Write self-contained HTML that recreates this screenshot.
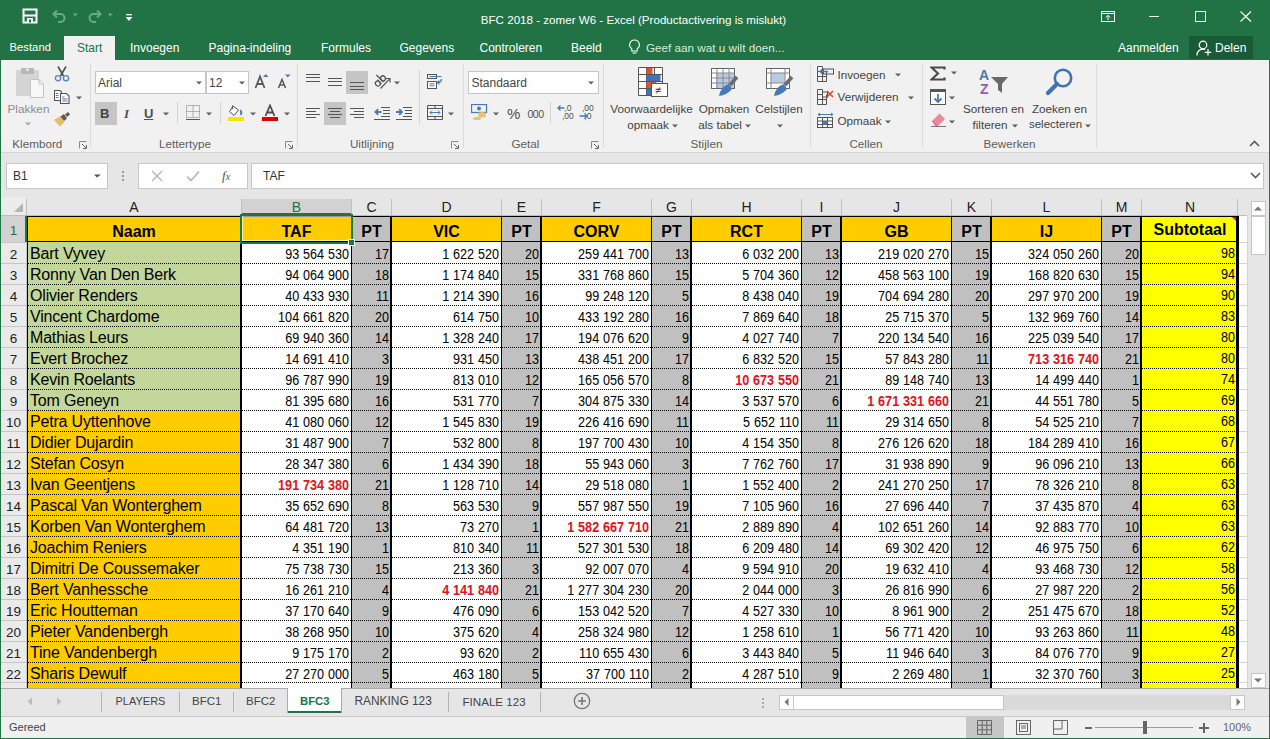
<!DOCTYPE html><html><head><meta charset="utf-8"><style>
*{box-sizing:border-box}
body{margin:0;width:1270px;height:739px;overflow:hidden;position:relative;background:#f3f3f3;font-family:"Liberation Sans",sans-serif}
.a{position:absolute}
.t{position:absolute;white-space:nowrap;line-height:1}
.nm{font-size:16px;letter-spacing:-0.18px;color:#000}
.nu{font-size:14px;color:#000;text-align:right;word-spacing:0.45px;transform:scaleX(0.9);transform-origin:100% 50%}
.hd{font-size:16px;font-weight:bold;color:#000;text-align:center}
.rd{color:#E0131B;font-weight:bold}
.ch{font-size:14px;color:#111;text-align:center}
.rh{font-size:13.5px;color:#262626;text-align:center}
.tb{font-size:12px;color:#fff}
.rb{font-size:12px;color:#444}
.gl{font-size:12px;color:#5b5b5b}
</style></head><body><div class="a" style="left:0;top:0;width:1270px;height:60px;background:#217346"></div>
<div class="a" style="left:0;top:153px;width:1270px;height:535px;background:#e6e6e6"></div>
<div class="a" style="left:1px;top:197px;width:1246px;height:18px;background:#e6e6e6"></div>
<div class="a" style="left:1px;top:197px;width:25px;height:18px;background:#ececec"></div>
<svg class="a" style="left:13px;top:202px" width="12" height="11"><path d="M10 1 L10 10 L1 10 Z" fill="#b5b5b5"/></svg>
<div class="a" style="left:1px;top:215px;width:1246px;height:1px;background:#bdbdbd"></div>
<div class="a" style="left:1px;top:216px;width:25px;height:472px;background:#eaeaea"></div>
<div class="a" style="left:1px;top:216px;width:24px;height:26px;background:#d2d2d2"></div>
<div class="a" style="left:25px;top:216px;width:2px;height:26px;background:#217346"></div>
<div class="a" style="left:242px;top:199px;width:110px;height:16px;background:#d2d2d2"></div>
<div class="a" style="left:242px;top:213px;width:110px;height:3px;background:#217346"></div>
<div class="a" style="left:26px;top:199px;width:1px;height:16px;background:#c0c0c0"></div>
<div class="a" style="left:241px;top:199px;width:1px;height:16px;background:#c0c0c0"></div>
<div class="a" style="left:351px;top:199px;width:1px;height:16px;background:#c0c0c0"></div>
<div class="a" style="left:391px;top:199px;width:1px;height:16px;background:#c0c0c0"></div>
<div class="a" style="left:501px;top:199px;width:1px;height:16px;background:#c0c0c0"></div>
<div class="a" style="left:541px;top:199px;width:1px;height:16px;background:#c0c0c0"></div>
<div class="a" style="left:651px;top:199px;width:1px;height:16px;background:#c0c0c0"></div>
<div class="a" style="left:691px;top:199px;width:1px;height:16px;background:#c0c0c0"></div>
<div class="a" style="left:801px;top:199px;width:1px;height:16px;background:#c0c0c0"></div>
<div class="a" style="left:841px;top:199px;width:1px;height:16px;background:#c0c0c0"></div>
<div class="a" style="left:951px;top:199px;width:1px;height:16px;background:#c0c0c0"></div>
<div class="a" style="left:991px;top:199px;width:1px;height:16px;background:#c0c0c0"></div>
<div class="a" style="left:1101px;top:199px;width:1px;height:16px;background:#c0c0c0"></div>
<div class="a" style="left:1141px;top:199px;width:1px;height:16px;background:#c0c0c0"></div>
<div class="a" style="left:1237px;top:199px;width:1px;height:16px;background:#c0c0c0"></div>
<div class="t ch" style="left:27px;top:200px;width:214px;color:#222">A</div>
<div class="t ch" style="left:242px;top:200px;width:109px;color:#217346">B</div>
<div class="t ch" style="left:352px;top:200px;width:39px;color:#222">C</div>
<div class="t ch" style="left:392px;top:200px;width:109px;color:#222">D</div>
<div class="t ch" style="left:502px;top:200px;width:39px;color:#222">E</div>
<div class="t ch" style="left:542px;top:200px;width:109px;color:#222">F</div>
<div class="t ch" style="left:652px;top:200px;width:39px;color:#222">G</div>
<div class="t ch" style="left:692px;top:200px;width:109px;color:#222">H</div>
<div class="t ch" style="left:802px;top:200px;width:39px;color:#222">I</div>
<div class="t ch" style="left:842px;top:200px;width:109px;color:#222">J</div>
<div class="t ch" style="left:952px;top:200px;width:39px;color:#222">K</div>
<div class="t ch" style="left:992px;top:200px;width:109px;color:#222">L</div>
<div class="t ch" style="left:1102px;top:200px;width:39px;color:#222">M</div>
<div class="t ch" style="left:1142px;top:200px;width:96px;color:#222">N</div>
<div class="a" style="left:1px;top:242px;width:25px;height:1px;background:#c6c6c6"></div>
<div class="t rh" style="left:1px;top:224px;width:25px;color:#217346">1</div>
<div class="a" style="left:1px;top:263px;width:25px;height:1px;background:#c6c6c6"></div>
<div class="t rh" style="left:1px;top:248px;width:25px;color:#222">2</div>
<div class="a" style="left:1px;top:284px;width:25px;height:1px;background:#c6c6c6"></div>
<div class="t rh" style="left:1px;top:269px;width:25px;color:#222">3</div>
<div class="a" style="left:1px;top:305px;width:25px;height:1px;background:#c6c6c6"></div>
<div class="t rh" style="left:1px;top:290px;width:25px;color:#222">4</div>
<div class="a" style="left:1px;top:326px;width:25px;height:1px;background:#c6c6c6"></div>
<div class="t rh" style="left:1px;top:311px;width:25px;color:#222">5</div>
<div class="a" style="left:1px;top:347px;width:25px;height:1px;background:#c6c6c6"></div>
<div class="t rh" style="left:1px;top:332px;width:25px;color:#222">6</div>
<div class="a" style="left:1px;top:368px;width:25px;height:1px;background:#c6c6c6"></div>
<div class="t rh" style="left:1px;top:353px;width:25px;color:#222">7</div>
<div class="a" style="left:1px;top:389px;width:25px;height:1px;background:#c6c6c6"></div>
<div class="t rh" style="left:1px;top:374px;width:25px;color:#222">8</div>
<div class="a" style="left:1px;top:410px;width:25px;height:1px;background:#c6c6c6"></div>
<div class="t rh" style="left:1px;top:395px;width:25px;color:#222">9</div>
<div class="a" style="left:1px;top:431px;width:25px;height:1px;background:#c6c6c6"></div>
<div class="t rh" style="left:1px;top:416px;width:25px;color:#222">10</div>
<div class="a" style="left:1px;top:452px;width:25px;height:1px;background:#c6c6c6"></div>
<div class="t rh" style="left:1px;top:437px;width:25px;color:#222">11</div>
<div class="a" style="left:1px;top:473px;width:25px;height:1px;background:#c6c6c6"></div>
<div class="t rh" style="left:1px;top:458px;width:25px;color:#222">12</div>
<div class="a" style="left:1px;top:494px;width:25px;height:1px;background:#c6c6c6"></div>
<div class="t rh" style="left:1px;top:479px;width:25px;color:#222">13</div>
<div class="a" style="left:1px;top:515px;width:25px;height:1px;background:#c6c6c6"></div>
<div class="t rh" style="left:1px;top:500px;width:25px;color:#222">14</div>
<div class="a" style="left:1px;top:536px;width:25px;height:1px;background:#c6c6c6"></div>
<div class="t rh" style="left:1px;top:521px;width:25px;color:#222">15</div>
<div class="a" style="left:1px;top:557px;width:25px;height:1px;background:#c6c6c6"></div>
<div class="t rh" style="left:1px;top:542px;width:25px;color:#222">16</div>
<div class="a" style="left:1px;top:578px;width:25px;height:1px;background:#c6c6c6"></div>
<div class="t rh" style="left:1px;top:563px;width:25px;color:#222">17</div>
<div class="a" style="left:1px;top:599px;width:25px;height:1px;background:#c6c6c6"></div>
<div class="t rh" style="left:1px;top:584px;width:25px;color:#222">18</div>
<div class="a" style="left:1px;top:620px;width:25px;height:1px;background:#c6c6c6"></div>
<div class="t rh" style="left:1px;top:605px;width:25px;color:#222">19</div>
<div class="a" style="left:1px;top:641px;width:25px;height:1px;background:#c6c6c6"></div>
<div class="t rh" style="left:1px;top:626px;width:25px;color:#222">20</div>
<div class="a" style="left:1px;top:662px;width:25px;height:1px;background:#c6c6c6"></div>
<div class="t rh" style="left:1px;top:647px;width:25px;color:#222">21</div>
<div class="a" style="left:1px;top:682px;width:25px;height:1px;background:#c6c6c6"></div>
<div class="t rh" style="left:1px;top:668px;width:25px;color:#222">22</div>
<div class="a" style="left:26px;top:216px;width:1px;height:472px;background:#c6c6c6"></div>
<div class="a" style="left:25px;top:216px;width:2px;height:26px;background:#217346"></div>
<div class="a" style="left:27px;top:216px;width:1220px;height:472px;background:#ffffff"></div>
<div class="a" style="left:1239px;top:242px;width:8px;height:1px;background:#d4d4d4"></div>
<div class="a" style="left:1239px;top:263px;width:8px;height:1px;background:#d4d4d4"></div>
<div class="a" style="left:1239px;top:284px;width:8px;height:1px;background:#d4d4d4"></div>
<div class="a" style="left:1239px;top:305px;width:8px;height:1px;background:#d4d4d4"></div>
<div class="a" style="left:1239px;top:326px;width:8px;height:1px;background:#d4d4d4"></div>
<div class="a" style="left:1239px;top:347px;width:8px;height:1px;background:#d4d4d4"></div>
<div class="a" style="left:1239px;top:368px;width:8px;height:1px;background:#d4d4d4"></div>
<div class="a" style="left:1239px;top:389px;width:8px;height:1px;background:#d4d4d4"></div>
<div class="a" style="left:1239px;top:410px;width:8px;height:1px;background:#d4d4d4"></div>
<div class="a" style="left:1239px;top:431px;width:8px;height:1px;background:#d4d4d4"></div>
<div class="a" style="left:1239px;top:452px;width:8px;height:1px;background:#d4d4d4"></div>
<div class="a" style="left:1239px;top:473px;width:8px;height:1px;background:#d4d4d4"></div>
<div class="a" style="left:1239px;top:494px;width:8px;height:1px;background:#d4d4d4"></div>
<div class="a" style="left:1239px;top:515px;width:8px;height:1px;background:#d4d4d4"></div>
<div class="a" style="left:1239px;top:536px;width:8px;height:1px;background:#d4d4d4"></div>
<div class="a" style="left:1239px;top:557px;width:8px;height:1px;background:#d4d4d4"></div>
<div class="a" style="left:1239px;top:578px;width:8px;height:1px;background:#d4d4d4"></div>
<div class="a" style="left:1239px;top:599px;width:8px;height:1px;background:#d4d4d4"></div>
<div class="a" style="left:1239px;top:620px;width:8px;height:1px;background:#d4d4d4"></div>
<div class="a" style="left:1239px;top:641px;width:8px;height:1px;background:#d4d4d4"></div>
<div class="a" style="left:1239px;top:662px;width:8px;height:1px;background:#d4d4d4"></div>
<div class="a" style="left:1239px;top:682px;width:8px;height:1px;background:#d4d4d4"></div>
<div class="a" style="left:1247px;top:216px;width:1px;height:472px;background:#d4d4d4"></div>
<div class="a" style="left:27px;top:216px;width:215px;height:26px;background:#FFCC00"></div>
<div class="a" style="left:27px;top:242px;width:215px;height:22px;background:#C4D79B"></div>
<div class="a" style="left:27px;top:264px;width:215px;height:21px;background:#C4D79B"></div>
<div class="a" style="left:27px;top:285px;width:215px;height:21px;background:#C4D79B"></div>
<div class="a" style="left:27px;top:306px;width:215px;height:21px;background:#C4D79B"></div>
<div class="a" style="left:27px;top:327px;width:215px;height:21px;background:#C4D79B"></div>
<div class="a" style="left:27px;top:348px;width:215px;height:21px;background:#C4D79B"></div>
<div class="a" style="left:27px;top:369px;width:215px;height:21px;background:#C4D79B"></div>
<div class="a" style="left:27px;top:390px;width:215px;height:21px;background:#C4D79B"></div>
<div class="a" style="left:27px;top:411px;width:215px;height:21px;background:#FFCC00"></div>
<div class="a" style="left:27px;top:432px;width:215px;height:21px;background:#FFCC00"></div>
<div class="a" style="left:27px;top:453px;width:215px;height:21px;background:#FFCC00"></div>
<div class="a" style="left:27px;top:474px;width:215px;height:21px;background:#FFCC00"></div>
<div class="a" style="left:27px;top:495px;width:215px;height:21px;background:#FFCC00"></div>
<div class="a" style="left:27px;top:516px;width:215px;height:21px;background:#FFCC00"></div>
<div class="a" style="left:27px;top:537px;width:215px;height:21px;background:#FFCC00"></div>
<div class="a" style="left:27px;top:558px;width:215px;height:21px;background:#FFCC00"></div>
<div class="a" style="left:27px;top:579px;width:215px;height:21px;background:#FFCC00"></div>
<div class="a" style="left:27px;top:600px;width:215px;height:21px;background:#FFCC00"></div>
<div class="a" style="left:27px;top:621px;width:215px;height:21px;background:#FFCC00"></div>
<div class="a" style="left:27px;top:642px;width:215px;height:21px;background:#FFCC00"></div>
<div class="a" style="left:27px;top:663px;width:215px;height:20px;background:#FFCC00"></div>
<div class="a" style="left:27px;top:683px;width:215px;height:5px;background:#FFCC00"></div>
<div class="a" style="left:242px;top:216px;width:110px;height:26px;background:#FFCC00"></div>
<div class="a" style="left:352px;top:216px;width:40px;height:26px;background:#C0C0C0"></div>
<div class="a" style="left:352px;top:242px;width:40px;height:22px;background:#C0C0C0"></div>
<div class="a" style="left:352px;top:264px;width:40px;height:21px;background:#C0C0C0"></div>
<div class="a" style="left:352px;top:285px;width:40px;height:21px;background:#C0C0C0"></div>
<div class="a" style="left:352px;top:306px;width:40px;height:21px;background:#C0C0C0"></div>
<div class="a" style="left:352px;top:327px;width:40px;height:21px;background:#C0C0C0"></div>
<div class="a" style="left:352px;top:348px;width:40px;height:21px;background:#C0C0C0"></div>
<div class="a" style="left:352px;top:369px;width:40px;height:21px;background:#C0C0C0"></div>
<div class="a" style="left:352px;top:390px;width:40px;height:21px;background:#C0C0C0"></div>
<div class="a" style="left:352px;top:411px;width:40px;height:21px;background:#C0C0C0"></div>
<div class="a" style="left:352px;top:432px;width:40px;height:21px;background:#C0C0C0"></div>
<div class="a" style="left:352px;top:453px;width:40px;height:21px;background:#C0C0C0"></div>
<div class="a" style="left:352px;top:474px;width:40px;height:21px;background:#C0C0C0"></div>
<div class="a" style="left:352px;top:495px;width:40px;height:21px;background:#C0C0C0"></div>
<div class="a" style="left:352px;top:516px;width:40px;height:21px;background:#C0C0C0"></div>
<div class="a" style="left:352px;top:537px;width:40px;height:21px;background:#C0C0C0"></div>
<div class="a" style="left:352px;top:558px;width:40px;height:21px;background:#C0C0C0"></div>
<div class="a" style="left:352px;top:579px;width:40px;height:21px;background:#C0C0C0"></div>
<div class="a" style="left:352px;top:600px;width:40px;height:21px;background:#C0C0C0"></div>
<div class="a" style="left:352px;top:621px;width:40px;height:21px;background:#C0C0C0"></div>
<div class="a" style="left:352px;top:642px;width:40px;height:21px;background:#C0C0C0"></div>
<div class="a" style="left:352px;top:663px;width:40px;height:20px;background:#C0C0C0"></div>
<div class="a" style="left:352px;top:683px;width:40px;height:5px;background:#C0C0C0"></div>
<div class="a" style="left:392px;top:216px;width:110px;height:26px;background:#FFCC00"></div>
<div class="a" style="left:502px;top:216px;width:40px;height:26px;background:#C0C0C0"></div>
<div class="a" style="left:502px;top:242px;width:40px;height:22px;background:#C0C0C0"></div>
<div class="a" style="left:502px;top:264px;width:40px;height:21px;background:#C0C0C0"></div>
<div class="a" style="left:502px;top:285px;width:40px;height:21px;background:#C0C0C0"></div>
<div class="a" style="left:502px;top:306px;width:40px;height:21px;background:#C0C0C0"></div>
<div class="a" style="left:502px;top:327px;width:40px;height:21px;background:#C0C0C0"></div>
<div class="a" style="left:502px;top:348px;width:40px;height:21px;background:#C0C0C0"></div>
<div class="a" style="left:502px;top:369px;width:40px;height:21px;background:#C0C0C0"></div>
<div class="a" style="left:502px;top:390px;width:40px;height:21px;background:#C0C0C0"></div>
<div class="a" style="left:502px;top:411px;width:40px;height:21px;background:#C0C0C0"></div>
<div class="a" style="left:502px;top:432px;width:40px;height:21px;background:#C0C0C0"></div>
<div class="a" style="left:502px;top:453px;width:40px;height:21px;background:#C0C0C0"></div>
<div class="a" style="left:502px;top:474px;width:40px;height:21px;background:#C0C0C0"></div>
<div class="a" style="left:502px;top:495px;width:40px;height:21px;background:#C0C0C0"></div>
<div class="a" style="left:502px;top:516px;width:40px;height:21px;background:#C0C0C0"></div>
<div class="a" style="left:502px;top:537px;width:40px;height:21px;background:#C0C0C0"></div>
<div class="a" style="left:502px;top:558px;width:40px;height:21px;background:#C0C0C0"></div>
<div class="a" style="left:502px;top:579px;width:40px;height:21px;background:#C0C0C0"></div>
<div class="a" style="left:502px;top:600px;width:40px;height:21px;background:#C0C0C0"></div>
<div class="a" style="left:502px;top:621px;width:40px;height:21px;background:#C0C0C0"></div>
<div class="a" style="left:502px;top:642px;width:40px;height:21px;background:#C0C0C0"></div>
<div class="a" style="left:502px;top:663px;width:40px;height:20px;background:#C0C0C0"></div>
<div class="a" style="left:502px;top:683px;width:40px;height:5px;background:#C0C0C0"></div>
<div class="a" style="left:542px;top:216px;width:110px;height:26px;background:#FFCC00"></div>
<div class="a" style="left:652px;top:216px;width:40px;height:26px;background:#C0C0C0"></div>
<div class="a" style="left:652px;top:242px;width:40px;height:22px;background:#C0C0C0"></div>
<div class="a" style="left:652px;top:264px;width:40px;height:21px;background:#C0C0C0"></div>
<div class="a" style="left:652px;top:285px;width:40px;height:21px;background:#C0C0C0"></div>
<div class="a" style="left:652px;top:306px;width:40px;height:21px;background:#C0C0C0"></div>
<div class="a" style="left:652px;top:327px;width:40px;height:21px;background:#C0C0C0"></div>
<div class="a" style="left:652px;top:348px;width:40px;height:21px;background:#C0C0C0"></div>
<div class="a" style="left:652px;top:369px;width:40px;height:21px;background:#C0C0C0"></div>
<div class="a" style="left:652px;top:390px;width:40px;height:21px;background:#C0C0C0"></div>
<div class="a" style="left:652px;top:411px;width:40px;height:21px;background:#C0C0C0"></div>
<div class="a" style="left:652px;top:432px;width:40px;height:21px;background:#C0C0C0"></div>
<div class="a" style="left:652px;top:453px;width:40px;height:21px;background:#C0C0C0"></div>
<div class="a" style="left:652px;top:474px;width:40px;height:21px;background:#C0C0C0"></div>
<div class="a" style="left:652px;top:495px;width:40px;height:21px;background:#C0C0C0"></div>
<div class="a" style="left:652px;top:516px;width:40px;height:21px;background:#C0C0C0"></div>
<div class="a" style="left:652px;top:537px;width:40px;height:21px;background:#C0C0C0"></div>
<div class="a" style="left:652px;top:558px;width:40px;height:21px;background:#C0C0C0"></div>
<div class="a" style="left:652px;top:579px;width:40px;height:21px;background:#C0C0C0"></div>
<div class="a" style="left:652px;top:600px;width:40px;height:21px;background:#C0C0C0"></div>
<div class="a" style="left:652px;top:621px;width:40px;height:21px;background:#C0C0C0"></div>
<div class="a" style="left:652px;top:642px;width:40px;height:21px;background:#C0C0C0"></div>
<div class="a" style="left:652px;top:663px;width:40px;height:20px;background:#C0C0C0"></div>
<div class="a" style="left:652px;top:683px;width:40px;height:5px;background:#C0C0C0"></div>
<div class="a" style="left:692px;top:216px;width:110px;height:26px;background:#FFCC00"></div>
<div class="a" style="left:802px;top:216px;width:40px;height:26px;background:#C0C0C0"></div>
<div class="a" style="left:802px;top:242px;width:40px;height:22px;background:#C0C0C0"></div>
<div class="a" style="left:802px;top:264px;width:40px;height:21px;background:#C0C0C0"></div>
<div class="a" style="left:802px;top:285px;width:40px;height:21px;background:#C0C0C0"></div>
<div class="a" style="left:802px;top:306px;width:40px;height:21px;background:#C0C0C0"></div>
<div class="a" style="left:802px;top:327px;width:40px;height:21px;background:#C0C0C0"></div>
<div class="a" style="left:802px;top:348px;width:40px;height:21px;background:#C0C0C0"></div>
<div class="a" style="left:802px;top:369px;width:40px;height:21px;background:#C0C0C0"></div>
<div class="a" style="left:802px;top:390px;width:40px;height:21px;background:#C0C0C0"></div>
<div class="a" style="left:802px;top:411px;width:40px;height:21px;background:#C0C0C0"></div>
<div class="a" style="left:802px;top:432px;width:40px;height:21px;background:#C0C0C0"></div>
<div class="a" style="left:802px;top:453px;width:40px;height:21px;background:#C0C0C0"></div>
<div class="a" style="left:802px;top:474px;width:40px;height:21px;background:#C0C0C0"></div>
<div class="a" style="left:802px;top:495px;width:40px;height:21px;background:#C0C0C0"></div>
<div class="a" style="left:802px;top:516px;width:40px;height:21px;background:#C0C0C0"></div>
<div class="a" style="left:802px;top:537px;width:40px;height:21px;background:#C0C0C0"></div>
<div class="a" style="left:802px;top:558px;width:40px;height:21px;background:#C0C0C0"></div>
<div class="a" style="left:802px;top:579px;width:40px;height:21px;background:#C0C0C0"></div>
<div class="a" style="left:802px;top:600px;width:40px;height:21px;background:#C0C0C0"></div>
<div class="a" style="left:802px;top:621px;width:40px;height:21px;background:#C0C0C0"></div>
<div class="a" style="left:802px;top:642px;width:40px;height:21px;background:#C0C0C0"></div>
<div class="a" style="left:802px;top:663px;width:40px;height:20px;background:#C0C0C0"></div>
<div class="a" style="left:802px;top:683px;width:40px;height:5px;background:#C0C0C0"></div>
<div class="a" style="left:842px;top:216px;width:110px;height:26px;background:#FFCC00"></div>
<div class="a" style="left:952px;top:216px;width:40px;height:26px;background:#C0C0C0"></div>
<div class="a" style="left:952px;top:242px;width:40px;height:22px;background:#C0C0C0"></div>
<div class="a" style="left:952px;top:264px;width:40px;height:21px;background:#C0C0C0"></div>
<div class="a" style="left:952px;top:285px;width:40px;height:21px;background:#C0C0C0"></div>
<div class="a" style="left:952px;top:306px;width:40px;height:21px;background:#C0C0C0"></div>
<div class="a" style="left:952px;top:327px;width:40px;height:21px;background:#C0C0C0"></div>
<div class="a" style="left:952px;top:348px;width:40px;height:21px;background:#C0C0C0"></div>
<div class="a" style="left:952px;top:369px;width:40px;height:21px;background:#C0C0C0"></div>
<div class="a" style="left:952px;top:390px;width:40px;height:21px;background:#C0C0C0"></div>
<div class="a" style="left:952px;top:411px;width:40px;height:21px;background:#C0C0C0"></div>
<div class="a" style="left:952px;top:432px;width:40px;height:21px;background:#C0C0C0"></div>
<div class="a" style="left:952px;top:453px;width:40px;height:21px;background:#C0C0C0"></div>
<div class="a" style="left:952px;top:474px;width:40px;height:21px;background:#C0C0C0"></div>
<div class="a" style="left:952px;top:495px;width:40px;height:21px;background:#C0C0C0"></div>
<div class="a" style="left:952px;top:516px;width:40px;height:21px;background:#C0C0C0"></div>
<div class="a" style="left:952px;top:537px;width:40px;height:21px;background:#C0C0C0"></div>
<div class="a" style="left:952px;top:558px;width:40px;height:21px;background:#C0C0C0"></div>
<div class="a" style="left:952px;top:579px;width:40px;height:21px;background:#C0C0C0"></div>
<div class="a" style="left:952px;top:600px;width:40px;height:21px;background:#C0C0C0"></div>
<div class="a" style="left:952px;top:621px;width:40px;height:21px;background:#C0C0C0"></div>
<div class="a" style="left:952px;top:642px;width:40px;height:21px;background:#C0C0C0"></div>
<div class="a" style="left:952px;top:663px;width:40px;height:20px;background:#C0C0C0"></div>
<div class="a" style="left:952px;top:683px;width:40px;height:5px;background:#C0C0C0"></div>
<div class="a" style="left:992px;top:216px;width:110px;height:26px;background:#FFCC00"></div>
<div class="a" style="left:1102px;top:216px;width:40px;height:26px;background:#C0C0C0"></div>
<div class="a" style="left:1102px;top:242px;width:40px;height:22px;background:#C0C0C0"></div>
<div class="a" style="left:1102px;top:264px;width:40px;height:21px;background:#C0C0C0"></div>
<div class="a" style="left:1102px;top:285px;width:40px;height:21px;background:#C0C0C0"></div>
<div class="a" style="left:1102px;top:306px;width:40px;height:21px;background:#C0C0C0"></div>
<div class="a" style="left:1102px;top:327px;width:40px;height:21px;background:#C0C0C0"></div>
<div class="a" style="left:1102px;top:348px;width:40px;height:21px;background:#C0C0C0"></div>
<div class="a" style="left:1102px;top:369px;width:40px;height:21px;background:#C0C0C0"></div>
<div class="a" style="left:1102px;top:390px;width:40px;height:21px;background:#C0C0C0"></div>
<div class="a" style="left:1102px;top:411px;width:40px;height:21px;background:#C0C0C0"></div>
<div class="a" style="left:1102px;top:432px;width:40px;height:21px;background:#C0C0C0"></div>
<div class="a" style="left:1102px;top:453px;width:40px;height:21px;background:#C0C0C0"></div>
<div class="a" style="left:1102px;top:474px;width:40px;height:21px;background:#C0C0C0"></div>
<div class="a" style="left:1102px;top:495px;width:40px;height:21px;background:#C0C0C0"></div>
<div class="a" style="left:1102px;top:516px;width:40px;height:21px;background:#C0C0C0"></div>
<div class="a" style="left:1102px;top:537px;width:40px;height:21px;background:#C0C0C0"></div>
<div class="a" style="left:1102px;top:558px;width:40px;height:21px;background:#C0C0C0"></div>
<div class="a" style="left:1102px;top:579px;width:40px;height:21px;background:#C0C0C0"></div>
<div class="a" style="left:1102px;top:600px;width:40px;height:21px;background:#C0C0C0"></div>
<div class="a" style="left:1102px;top:621px;width:40px;height:21px;background:#C0C0C0"></div>
<div class="a" style="left:1102px;top:642px;width:40px;height:21px;background:#C0C0C0"></div>
<div class="a" style="left:1102px;top:663px;width:40px;height:20px;background:#C0C0C0"></div>
<div class="a" style="left:1102px;top:683px;width:40px;height:5px;background:#C0C0C0"></div>
<div class="a" style="left:1142px;top:216px;width:97px;height:26px;background:#FFFF00"></div>
<div class="a" style="left:1142px;top:242px;width:97px;height:22px;background:#FFFF00"></div>
<div class="a" style="left:1142px;top:264px;width:97px;height:21px;background:#FFFF00"></div>
<div class="a" style="left:1142px;top:285px;width:97px;height:21px;background:#FFFF00"></div>
<div class="a" style="left:1142px;top:306px;width:97px;height:21px;background:#FFFF00"></div>
<div class="a" style="left:1142px;top:327px;width:97px;height:21px;background:#FFFF00"></div>
<div class="a" style="left:1142px;top:348px;width:97px;height:21px;background:#FFFF00"></div>
<div class="a" style="left:1142px;top:369px;width:97px;height:21px;background:#FFFF00"></div>
<div class="a" style="left:1142px;top:390px;width:97px;height:21px;background:#FFFF00"></div>
<div class="a" style="left:1142px;top:411px;width:97px;height:21px;background:#FFFF00"></div>
<div class="a" style="left:1142px;top:432px;width:97px;height:21px;background:#FFFF00"></div>
<div class="a" style="left:1142px;top:453px;width:97px;height:21px;background:#FFFF00"></div>
<div class="a" style="left:1142px;top:474px;width:97px;height:21px;background:#FFFF00"></div>
<div class="a" style="left:1142px;top:495px;width:97px;height:21px;background:#FFFF00"></div>
<div class="a" style="left:1142px;top:516px;width:97px;height:21px;background:#FFFF00"></div>
<div class="a" style="left:1142px;top:537px;width:97px;height:21px;background:#FFFF00"></div>
<div class="a" style="left:1142px;top:558px;width:97px;height:21px;background:#FFFF00"></div>
<div class="a" style="left:1142px;top:579px;width:97px;height:21px;background:#FFFF00"></div>
<div class="a" style="left:1142px;top:600px;width:97px;height:21px;background:#FFFF00"></div>
<div class="a" style="left:1142px;top:621px;width:97px;height:21px;background:#FFFF00"></div>
<div class="a" style="left:1142px;top:642px;width:97px;height:21px;background:#FFFF00"></div>
<div class="a" style="left:1142px;top:663px;width:97px;height:20px;background:#FFFF00"></div>
<div class="a" style="left:1142px;top:683px;width:97px;height:5px;background:#FFFF00"></div>
<div class="a" style="left:28px;top:263px;width:1210px;height:1px;background:repeating-linear-gradient(90deg,#000 0 1px,transparent 1px 2px)"></div>
<div class="a" style="left:28px;top:284px;width:1210px;height:1px;background:repeating-linear-gradient(90deg,#000 0 1px,transparent 1px 2px)"></div>
<div class="a" style="left:28px;top:305px;width:1210px;height:1px;background:repeating-linear-gradient(90deg,#000 0 1px,transparent 1px 2px)"></div>
<div class="a" style="left:28px;top:326px;width:1210px;height:1px;background:repeating-linear-gradient(90deg,#000 0 1px,transparent 1px 2px)"></div>
<div class="a" style="left:28px;top:347px;width:1210px;height:1px;background:repeating-linear-gradient(90deg,#000 0 1px,transparent 1px 2px)"></div>
<div class="a" style="left:28px;top:368px;width:1210px;height:1px;background:repeating-linear-gradient(90deg,#000 0 1px,transparent 1px 2px)"></div>
<div class="a" style="left:28px;top:389px;width:1210px;height:1px;background:repeating-linear-gradient(90deg,#000 0 1px,transparent 1px 2px)"></div>
<div class="a" style="left:28px;top:410px;width:1210px;height:1px;background:repeating-linear-gradient(90deg,#000 0 1px,transparent 1px 2px)"></div>
<div class="a" style="left:28px;top:431px;width:1210px;height:1px;background:repeating-linear-gradient(90deg,#000 0 1px,transparent 1px 2px)"></div>
<div class="a" style="left:28px;top:452px;width:1210px;height:1px;background:repeating-linear-gradient(90deg,#000 0 1px,transparent 1px 2px)"></div>
<div class="a" style="left:28px;top:473px;width:1210px;height:1px;background:repeating-linear-gradient(90deg,#000 0 1px,transparent 1px 2px)"></div>
<div class="a" style="left:28px;top:494px;width:1210px;height:1px;background:repeating-linear-gradient(90deg,#000 0 1px,transparent 1px 2px)"></div>
<div class="a" style="left:28px;top:515px;width:1210px;height:1px;background:repeating-linear-gradient(90deg,#000 0 1px,transparent 1px 2px)"></div>
<div class="a" style="left:28px;top:536px;width:1210px;height:1px;background:repeating-linear-gradient(90deg,#000 0 1px,transparent 1px 2px)"></div>
<div class="a" style="left:28px;top:557px;width:1210px;height:1px;background:repeating-linear-gradient(90deg,#000 0 1px,transparent 1px 2px)"></div>
<div class="a" style="left:28px;top:578px;width:1210px;height:1px;background:repeating-linear-gradient(90deg,#000 0 1px,transparent 1px 2px)"></div>
<div class="a" style="left:28px;top:599px;width:1210px;height:1px;background:repeating-linear-gradient(90deg,#000 0 1px,transparent 1px 2px)"></div>
<div class="a" style="left:28px;top:620px;width:1210px;height:1px;background:repeating-linear-gradient(90deg,#000 0 1px,transparent 1px 2px)"></div>
<div class="a" style="left:28px;top:641px;width:1210px;height:1px;background:repeating-linear-gradient(90deg,#000 0 1px,transparent 1px 2px)"></div>
<div class="a" style="left:28px;top:662px;width:1210px;height:1px;background:repeating-linear-gradient(90deg,#000 0 1px,transparent 1px 2px)"></div>
<div class="a" style="left:28px;top:682px;width:1210px;height:1px;background:repeating-linear-gradient(90deg,#000 0 1px,transparent 1px 2px)"></div>
<div class="a" style="left:27px;top:216px;width:1212px;height:1px;background:#000"></div>
<div class="a" style="left:27px;top:241px;width:1212px;height:1px;background:#000"></div>
<div class="a" style="left:240px;top:216px;width:2px;height:472px;background:#000"></div>
<div class="a" style="left:351px;top:216px;width:1px;height:472px;background:#000"></div>
<div class="a" style="left:390px;top:216px;width:2px;height:472px;background:#000"></div>
<div class="a" style="left:501px;top:216px;width:1px;height:472px;background:#000"></div>
<div class="a" style="left:540px;top:216px;width:2px;height:472px;background:#000"></div>
<div class="a" style="left:651px;top:216px;width:1px;height:472px;background:#000"></div>
<div class="a" style="left:690px;top:216px;width:2px;height:472px;background:#000"></div>
<div class="a" style="left:801px;top:216px;width:1px;height:472px;background:#000"></div>
<div class="a" style="left:840px;top:216px;width:2px;height:472px;background:#000"></div>
<div class="a" style="left:951px;top:216px;width:1px;height:472px;background:#000"></div>
<div class="a" style="left:990px;top:216px;width:2px;height:472px;background:#000"></div>
<div class="a" style="left:1101px;top:216px;width:1px;height:472px;background:#000"></div>
<div class="a" style="left:1140px;top:216px;width:2px;height:472px;background:#000"></div>
<div class="a" style="left:1236px;top:216px;width:3px;height:472px;background:#000"></div>
<div class="a" style="left:27px;top:216px;width:1px;height:472px;background:#000"></div>
<svg class="a" style="left:1232px;top:217px" width="4" height="4"><path d="M0 0 L4 0 L4 4 Z" fill="#c8201a"/></svg>
<div class="t hd" style="left:27px;top:224px;width:214px">Naam</div>
<div class="t hd" style="left:242px;top:224px;width:109px">TAF</div>
<div class="t hd" style="left:352px;top:224px;width:39px">PT</div>
<div class="t hd" style="left:392px;top:224px;width:109px">VIC</div>
<div class="t hd" style="left:502px;top:224px;width:39px">PT</div>
<div class="t hd" style="left:542px;top:224px;width:109px">CORV</div>
<div class="t hd" style="left:652px;top:224px;width:39px">PT</div>
<div class="t hd" style="left:692px;top:224px;width:109px">RCT</div>
<div class="t hd" style="left:802px;top:224px;width:39px">PT</div>
<div class="t hd" style="left:842px;top:224px;width:109px">GB</div>
<div class="t hd" style="left:952px;top:224px;width:39px">PT</div>
<div class="t hd" style="left:992px;top:224px;width:109px">IJ</div>
<div class="t hd" style="left:1102px;top:224px;width:39px">PT</div>
<div class="t hd" style="left:1142px;top:222px;width:96px">Subtotaal</div>
<div class="t nm" style="left:30px;top:246px">Bart Vyvey</div>
<div class="t nu" style="left:149px;top:247px;width:200px">93 564 530</div>
<div class="t nu" style="left:189px;top:247px;width:200px">17</div>
<div class="t nu" style="left:299px;top:247px;width:200px">1 622 520</div>
<div class="t nu" style="left:339px;top:247px;width:200px">20</div>
<div class="t nu" style="left:449px;top:247px;width:200px">259 441 700</div>
<div class="t nu" style="left:489px;top:247px;width:200px">13</div>
<div class="t nu" style="left:599px;top:247px;width:200px">6 032 200</div>
<div class="t nu" style="left:639px;top:247px;width:200px">13</div>
<div class="t nu" style="left:749px;top:247px;width:200px">219 020 270</div>
<div class="t nu" style="left:789px;top:247px;width:200px">15</div>
<div class="t nu" style="left:899px;top:247px;width:200px">324 050 260</div>
<div class="t nu" style="left:939px;top:247px;width:200px">20</div>
<div class="t nu" style="left:1035px;top:246px;width:200px">98</div>
<div class="t nm" style="left:30px;top:267px">Ronny Van Den Berk</div>
<div class="t nu" style="left:149px;top:268px;width:200px">94 064 900</div>
<div class="t nu" style="left:189px;top:268px;width:200px">18</div>
<div class="t nu" style="left:299px;top:268px;width:200px">1 174 840</div>
<div class="t nu" style="left:339px;top:268px;width:200px">15</div>
<div class="t nu" style="left:449px;top:268px;width:200px">331 768 860</div>
<div class="t nu" style="left:489px;top:268px;width:200px">15</div>
<div class="t nu" style="left:599px;top:268px;width:200px">5 704 360</div>
<div class="t nu" style="left:639px;top:268px;width:200px">12</div>
<div class="t nu" style="left:749px;top:268px;width:200px">458 563 100</div>
<div class="t nu" style="left:789px;top:268px;width:200px">19</div>
<div class="t nu" style="left:899px;top:268px;width:200px">168 820 630</div>
<div class="t nu" style="left:939px;top:268px;width:200px">15</div>
<div class="t nu" style="left:1035px;top:267px;width:200px">94</div>
<div class="t nm" style="left:30px;top:288px">Olivier Renders</div>
<div class="t nu" style="left:149px;top:289px;width:200px">40 433 930</div>
<div class="t nu" style="left:189px;top:289px;width:200px">11</div>
<div class="t nu" style="left:299px;top:289px;width:200px">1 214 390</div>
<div class="t nu" style="left:339px;top:289px;width:200px">16</div>
<div class="t nu" style="left:449px;top:289px;width:200px">99 248 120</div>
<div class="t nu" style="left:489px;top:289px;width:200px">5</div>
<div class="t nu" style="left:599px;top:289px;width:200px">8 438 040</div>
<div class="t nu" style="left:639px;top:289px;width:200px">19</div>
<div class="t nu" style="left:749px;top:289px;width:200px">704 694 280</div>
<div class="t nu" style="left:789px;top:289px;width:200px">20</div>
<div class="t nu" style="left:899px;top:289px;width:200px">297 970 200</div>
<div class="t nu" style="left:939px;top:289px;width:200px">19</div>
<div class="t nu" style="left:1035px;top:288px;width:200px">90</div>
<div class="t nm" style="left:30px;top:309px">Vincent Chardome</div>
<div class="t nu" style="left:149px;top:310px;width:200px">104 661 820</div>
<div class="t nu" style="left:189px;top:310px;width:200px">20</div>
<div class="t nu" style="left:299px;top:310px;width:200px">614 750</div>
<div class="t nu" style="left:339px;top:310px;width:200px">10</div>
<div class="t nu" style="left:449px;top:310px;width:200px">433 192 280</div>
<div class="t nu" style="left:489px;top:310px;width:200px">16</div>
<div class="t nu" style="left:599px;top:310px;width:200px">7 869 640</div>
<div class="t nu" style="left:639px;top:310px;width:200px">18</div>
<div class="t nu" style="left:749px;top:310px;width:200px">25 715 370</div>
<div class="t nu" style="left:789px;top:310px;width:200px">5</div>
<div class="t nu" style="left:899px;top:310px;width:200px">132 969 760</div>
<div class="t nu" style="left:939px;top:310px;width:200px">14</div>
<div class="t nu" style="left:1035px;top:309px;width:200px">83</div>
<div class="t nm" style="left:30px;top:330px">Mathias Leurs</div>
<div class="t nu" style="left:149px;top:331px;width:200px">69 940 360</div>
<div class="t nu" style="left:189px;top:331px;width:200px">14</div>
<div class="t nu" style="left:299px;top:331px;width:200px">1 328 240</div>
<div class="t nu" style="left:339px;top:331px;width:200px">17</div>
<div class="t nu" style="left:449px;top:331px;width:200px">194 076 620</div>
<div class="t nu" style="left:489px;top:331px;width:200px">9</div>
<div class="t nu" style="left:599px;top:331px;width:200px">4 027 740</div>
<div class="t nu" style="left:639px;top:331px;width:200px">7</div>
<div class="t nu" style="left:749px;top:331px;width:200px">220 134 540</div>
<div class="t nu" style="left:789px;top:331px;width:200px">16</div>
<div class="t nu" style="left:899px;top:331px;width:200px">225 039 540</div>
<div class="t nu" style="left:939px;top:331px;width:200px">17</div>
<div class="t nu" style="left:1035px;top:330px;width:200px">80</div>
<div class="t nm" style="left:30px;top:351px">Evert Brochez</div>
<div class="t nu" style="left:149px;top:352px;width:200px">14 691 410</div>
<div class="t nu" style="left:189px;top:352px;width:200px">3</div>
<div class="t nu" style="left:299px;top:352px;width:200px">931 450</div>
<div class="t nu" style="left:339px;top:352px;width:200px">13</div>
<div class="t nu" style="left:449px;top:352px;width:200px">438 451 200</div>
<div class="t nu" style="left:489px;top:352px;width:200px">17</div>
<div class="t nu" style="left:599px;top:352px;width:200px">6 832 520</div>
<div class="t nu" style="left:639px;top:352px;width:200px">15</div>
<div class="t nu" style="left:749px;top:352px;width:200px">57 843 280</div>
<div class="t nu" style="left:789px;top:352px;width:200px">11</div>
<div class="t nu rd" style="left:899px;top:352px;width:200px">713 316 740</div>
<div class="t nu" style="left:939px;top:352px;width:200px">21</div>
<div class="t nu" style="left:1035px;top:351px;width:200px">80</div>
<div class="t nm" style="left:30px;top:372px">Kevin Roelants</div>
<div class="t nu" style="left:149px;top:373px;width:200px">96 787 990</div>
<div class="t nu" style="left:189px;top:373px;width:200px">19</div>
<div class="t nu" style="left:299px;top:373px;width:200px">813 010</div>
<div class="t nu" style="left:339px;top:373px;width:200px">12</div>
<div class="t nu" style="left:449px;top:373px;width:200px">165 056 570</div>
<div class="t nu" style="left:489px;top:373px;width:200px">8</div>
<div class="t nu rd" style="left:599px;top:373px;width:200px">10 673 550</div>
<div class="t nu" style="left:639px;top:373px;width:200px">21</div>
<div class="t nu" style="left:749px;top:373px;width:200px">89 148 740</div>
<div class="t nu" style="left:789px;top:373px;width:200px">13</div>
<div class="t nu" style="left:899px;top:373px;width:200px">14 499 440</div>
<div class="t nu" style="left:939px;top:373px;width:200px">1</div>
<div class="t nu" style="left:1035px;top:372px;width:200px">74</div>
<div class="t nm" style="left:30px;top:393px">Tom Geneyn</div>
<div class="t nu" style="left:149px;top:394px;width:200px">81 395 680</div>
<div class="t nu" style="left:189px;top:394px;width:200px">16</div>
<div class="t nu" style="left:299px;top:394px;width:200px">531 770</div>
<div class="t nu" style="left:339px;top:394px;width:200px">7</div>
<div class="t nu" style="left:449px;top:394px;width:200px">304 875 330</div>
<div class="t nu" style="left:489px;top:394px;width:200px">14</div>
<div class="t nu" style="left:599px;top:394px;width:200px">3 537 570</div>
<div class="t nu" style="left:639px;top:394px;width:200px">6</div>
<div class="t nu rd" style="left:749px;top:394px;width:200px">1 671 331 660</div>
<div class="t nu" style="left:789px;top:394px;width:200px">21</div>
<div class="t nu" style="left:899px;top:394px;width:200px">44 551 780</div>
<div class="t nu" style="left:939px;top:394px;width:200px">5</div>
<div class="t nu" style="left:1035px;top:393px;width:200px">69</div>
<div class="t nm" style="left:30px;top:414px">Petra Uyttenhove</div>
<div class="t nu" style="left:149px;top:415px;width:200px">41 080 060</div>
<div class="t nu" style="left:189px;top:415px;width:200px">12</div>
<div class="t nu" style="left:299px;top:415px;width:200px">1 545 830</div>
<div class="t nu" style="left:339px;top:415px;width:200px">19</div>
<div class="t nu" style="left:449px;top:415px;width:200px">226 416 690</div>
<div class="t nu" style="left:489px;top:415px;width:200px">11</div>
<div class="t nu" style="left:599px;top:415px;width:200px">5 652 110</div>
<div class="t nu" style="left:639px;top:415px;width:200px">11</div>
<div class="t nu" style="left:749px;top:415px;width:200px">29 314 650</div>
<div class="t nu" style="left:789px;top:415px;width:200px">8</div>
<div class="t nu" style="left:899px;top:415px;width:200px">54 525 210</div>
<div class="t nu" style="left:939px;top:415px;width:200px">7</div>
<div class="t nu" style="left:1035px;top:414px;width:200px">68</div>
<div class="t nm" style="left:30px;top:435px">Didier Dujardin</div>
<div class="t nu" style="left:149px;top:436px;width:200px">31 487 900</div>
<div class="t nu" style="left:189px;top:436px;width:200px">7</div>
<div class="t nu" style="left:299px;top:436px;width:200px">532 800</div>
<div class="t nu" style="left:339px;top:436px;width:200px">8</div>
<div class="t nu" style="left:449px;top:436px;width:200px">197 700 430</div>
<div class="t nu" style="left:489px;top:436px;width:200px">10</div>
<div class="t nu" style="left:599px;top:436px;width:200px">4 154 350</div>
<div class="t nu" style="left:639px;top:436px;width:200px">8</div>
<div class="t nu" style="left:749px;top:436px;width:200px">276 126 620</div>
<div class="t nu" style="left:789px;top:436px;width:200px">18</div>
<div class="t nu" style="left:899px;top:436px;width:200px">184 289 410</div>
<div class="t nu" style="left:939px;top:436px;width:200px">16</div>
<div class="t nu" style="left:1035px;top:435px;width:200px">67</div>
<div class="t nm" style="left:30px;top:456px">Stefan Cosyn</div>
<div class="t nu" style="left:149px;top:457px;width:200px">28 347 380</div>
<div class="t nu" style="left:189px;top:457px;width:200px">6</div>
<div class="t nu" style="left:299px;top:457px;width:200px">1 434 390</div>
<div class="t nu" style="left:339px;top:457px;width:200px">18</div>
<div class="t nu" style="left:449px;top:457px;width:200px">55 943 060</div>
<div class="t nu" style="left:489px;top:457px;width:200px">3</div>
<div class="t nu" style="left:599px;top:457px;width:200px">7 762 760</div>
<div class="t nu" style="left:639px;top:457px;width:200px">17</div>
<div class="t nu" style="left:749px;top:457px;width:200px">31 938 890</div>
<div class="t nu" style="left:789px;top:457px;width:200px">9</div>
<div class="t nu" style="left:899px;top:457px;width:200px">96 096 210</div>
<div class="t nu" style="left:939px;top:457px;width:200px">13</div>
<div class="t nu" style="left:1035px;top:456px;width:200px">66</div>
<div class="t nm" style="left:30px;top:477px">Ivan Geentjens</div>
<div class="t nu rd" style="left:149px;top:478px;width:200px">191 734 380</div>
<div class="t nu" style="left:189px;top:478px;width:200px">21</div>
<div class="t nu" style="left:299px;top:478px;width:200px">1 128 710</div>
<div class="t nu" style="left:339px;top:478px;width:200px">14</div>
<div class="t nu" style="left:449px;top:478px;width:200px">29 518 080</div>
<div class="t nu" style="left:489px;top:478px;width:200px">1</div>
<div class="t nu" style="left:599px;top:478px;width:200px">1 552 400</div>
<div class="t nu" style="left:639px;top:478px;width:200px">2</div>
<div class="t nu" style="left:749px;top:478px;width:200px">241 270 250</div>
<div class="t nu" style="left:789px;top:478px;width:200px">17</div>
<div class="t nu" style="left:899px;top:478px;width:200px">78 326 210</div>
<div class="t nu" style="left:939px;top:478px;width:200px">8</div>
<div class="t nu" style="left:1035px;top:477px;width:200px">63</div>
<div class="t nm" style="left:30px;top:498px">Pascal Van Wonterghem</div>
<div class="t nu" style="left:149px;top:499px;width:200px">35 652 690</div>
<div class="t nu" style="left:189px;top:499px;width:200px">8</div>
<div class="t nu" style="left:299px;top:499px;width:200px">563 530</div>
<div class="t nu" style="left:339px;top:499px;width:200px">9</div>
<div class="t nu" style="left:449px;top:499px;width:200px">557 987 550</div>
<div class="t nu" style="left:489px;top:499px;width:200px">19</div>
<div class="t nu" style="left:599px;top:499px;width:200px">7 105 960</div>
<div class="t nu" style="left:639px;top:499px;width:200px">16</div>
<div class="t nu" style="left:749px;top:499px;width:200px">27 696 440</div>
<div class="t nu" style="left:789px;top:499px;width:200px">7</div>
<div class="t nu" style="left:899px;top:499px;width:200px">37 435 870</div>
<div class="t nu" style="left:939px;top:499px;width:200px">4</div>
<div class="t nu" style="left:1035px;top:498px;width:200px">63</div>
<div class="t nm" style="left:30px;top:519px">Korben Van Wonterghem</div>
<div class="t nu" style="left:149px;top:520px;width:200px">64 481 720</div>
<div class="t nu" style="left:189px;top:520px;width:200px">13</div>
<div class="t nu" style="left:299px;top:520px;width:200px">73 270</div>
<div class="t nu" style="left:339px;top:520px;width:200px">1</div>
<div class="t nu rd" style="left:449px;top:520px;width:200px">1 582 667 710</div>
<div class="t nu" style="left:489px;top:520px;width:200px">21</div>
<div class="t nu" style="left:599px;top:520px;width:200px">2 889 890</div>
<div class="t nu" style="left:639px;top:520px;width:200px">4</div>
<div class="t nu" style="left:749px;top:520px;width:200px">102 651 260</div>
<div class="t nu" style="left:789px;top:520px;width:200px">14</div>
<div class="t nu" style="left:899px;top:520px;width:200px">92 883 770</div>
<div class="t nu" style="left:939px;top:520px;width:200px">10</div>
<div class="t nu" style="left:1035px;top:519px;width:200px">63</div>
<div class="t nm" style="left:30px;top:540px">Joachim Reniers</div>
<div class="t nu" style="left:149px;top:541px;width:200px">4 351 190</div>
<div class="t nu" style="left:189px;top:541px;width:200px">1</div>
<div class="t nu" style="left:299px;top:541px;width:200px">810 340</div>
<div class="t nu" style="left:339px;top:541px;width:200px">11</div>
<div class="t nu" style="left:449px;top:541px;width:200px">527 301 530</div>
<div class="t nu" style="left:489px;top:541px;width:200px">18</div>
<div class="t nu" style="left:599px;top:541px;width:200px">6 209 480</div>
<div class="t nu" style="left:639px;top:541px;width:200px">14</div>
<div class="t nu" style="left:749px;top:541px;width:200px">69 302 420</div>
<div class="t nu" style="left:789px;top:541px;width:200px">12</div>
<div class="t nu" style="left:899px;top:541px;width:200px">46 975 750</div>
<div class="t nu" style="left:939px;top:541px;width:200px">6</div>
<div class="t nu" style="left:1035px;top:540px;width:200px">62</div>
<div class="t nm" style="left:30px;top:561px">Dimitri De Coussemaker</div>
<div class="t nu" style="left:149px;top:562px;width:200px">75 738 730</div>
<div class="t nu" style="left:189px;top:562px;width:200px">15</div>
<div class="t nu" style="left:299px;top:562px;width:200px">213 360</div>
<div class="t nu" style="left:339px;top:562px;width:200px">3</div>
<div class="t nu" style="left:449px;top:562px;width:200px">92 007 070</div>
<div class="t nu" style="left:489px;top:562px;width:200px">4</div>
<div class="t nu" style="left:599px;top:562px;width:200px">9 594 910</div>
<div class="t nu" style="left:639px;top:562px;width:200px">20</div>
<div class="t nu" style="left:749px;top:562px;width:200px">19 632 410</div>
<div class="t nu" style="left:789px;top:562px;width:200px">4</div>
<div class="t nu" style="left:899px;top:562px;width:200px">93 468 730</div>
<div class="t nu" style="left:939px;top:562px;width:200px">12</div>
<div class="t nu" style="left:1035px;top:561px;width:200px">58</div>
<div class="t nm" style="left:30px;top:582px">Bert Vanhessche</div>
<div class="t nu" style="left:149px;top:583px;width:200px">16 261 210</div>
<div class="t nu" style="left:189px;top:583px;width:200px">4</div>
<div class="t nu rd" style="left:299px;top:583px;width:200px">4 141 840</div>
<div class="t nu" style="left:339px;top:583px;width:200px">21</div>
<div class="t nu" style="left:449px;top:583px;width:200px">1 277 304 230</div>
<div class="t nu" style="left:489px;top:583px;width:200px">20</div>
<div class="t nu" style="left:599px;top:583px;width:200px">2 044 000</div>
<div class="t nu" style="left:639px;top:583px;width:200px">3</div>
<div class="t nu" style="left:749px;top:583px;width:200px">26 816 990</div>
<div class="t nu" style="left:789px;top:583px;width:200px">6</div>
<div class="t nu" style="left:899px;top:583px;width:200px">27 987 220</div>
<div class="t nu" style="left:939px;top:583px;width:200px">2</div>
<div class="t nu" style="left:1035px;top:582px;width:200px">56</div>
<div class="t nm" style="left:30px;top:603px">Eric Houtteman</div>
<div class="t nu" style="left:149px;top:604px;width:200px">37 170 640</div>
<div class="t nu" style="left:189px;top:604px;width:200px">9</div>
<div class="t nu" style="left:299px;top:604px;width:200px">476 090</div>
<div class="t nu" style="left:339px;top:604px;width:200px">6</div>
<div class="t nu" style="left:449px;top:604px;width:200px">153 042 520</div>
<div class="t nu" style="left:489px;top:604px;width:200px">7</div>
<div class="t nu" style="left:599px;top:604px;width:200px">4 527 330</div>
<div class="t nu" style="left:639px;top:604px;width:200px">10</div>
<div class="t nu" style="left:749px;top:604px;width:200px">8 961 900</div>
<div class="t nu" style="left:789px;top:604px;width:200px">2</div>
<div class="t nu" style="left:899px;top:604px;width:200px">251 475 670</div>
<div class="t nu" style="left:939px;top:604px;width:200px">18</div>
<div class="t nu" style="left:1035px;top:603px;width:200px">52</div>
<div class="t nm" style="left:30px;top:624px">Pieter Vandenbergh</div>
<div class="t nu" style="left:149px;top:625px;width:200px">38 268 950</div>
<div class="t nu" style="left:189px;top:625px;width:200px">10</div>
<div class="t nu" style="left:299px;top:625px;width:200px">375 620</div>
<div class="t nu" style="left:339px;top:625px;width:200px">4</div>
<div class="t nu" style="left:449px;top:625px;width:200px">258 324 980</div>
<div class="t nu" style="left:489px;top:625px;width:200px">12</div>
<div class="t nu" style="left:599px;top:625px;width:200px">1 258 610</div>
<div class="t nu" style="left:639px;top:625px;width:200px">1</div>
<div class="t nu" style="left:749px;top:625px;width:200px">56 771 420</div>
<div class="t nu" style="left:789px;top:625px;width:200px">10</div>
<div class="t nu" style="left:899px;top:625px;width:200px">93 263 860</div>
<div class="t nu" style="left:939px;top:625px;width:200px">11</div>
<div class="t nu" style="left:1035px;top:624px;width:200px">48</div>
<div class="t nm" style="left:30px;top:645px">Tine Vandenbergh</div>
<div class="t nu" style="left:149px;top:646px;width:200px">9 175 170</div>
<div class="t nu" style="left:189px;top:646px;width:200px">2</div>
<div class="t nu" style="left:299px;top:646px;width:200px">93 620</div>
<div class="t nu" style="left:339px;top:646px;width:200px">2</div>
<div class="t nu" style="left:449px;top:646px;width:200px">110 655 430</div>
<div class="t nu" style="left:489px;top:646px;width:200px">6</div>
<div class="t nu" style="left:599px;top:646px;width:200px">3 443 840</div>
<div class="t nu" style="left:639px;top:646px;width:200px">5</div>
<div class="t nu" style="left:749px;top:646px;width:200px">11 946 640</div>
<div class="t nu" style="left:789px;top:646px;width:200px">3</div>
<div class="t nu" style="left:899px;top:646px;width:200px">84 076 770</div>
<div class="t nu" style="left:939px;top:646px;width:200px">9</div>
<div class="t nu" style="left:1035px;top:645px;width:200px">27</div>
<div class="t nm" style="left:30px;top:666px">Sharis Dewulf</div>
<div class="t nu" style="left:149px;top:667px;width:200px">27 270 000</div>
<div class="t nu" style="left:189px;top:667px;width:200px">5</div>
<div class="t nu" style="left:299px;top:667px;width:200px">463 180</div>
<div class="t nu" style="left:339px;top:667px;width:200px">5</div>
<div class="t nu" style="left:449px;top:667px;width:200px">37 700 110</div>
<div class="t nu" style="left:489px;top:667px;width:200px">2</div>
<div class="t nu" style="left:599px;top:667px;width:200px">4 287 510</div>
<div class="t nu" style="left:639px;top:667px;width:200px">9</div>
<div class="t nu" style="left:749px;top:667px;width:200px">2 269 480</div>
<div class="t nu" style="left:789px;top:667px;width:200px">1</div>
<div class="t nu" style="left:899px;top:667px;width:200px">32 370 760</div>
<div class="t nu" style="left:939px;top:667px;width:200px">3</div>
<div class="t nu" style="left:1035px;top:666px;width:200px">25</div>
<div class="a" style="left:242px;top:216px;width:109px;height:1px;background:rgba(255,255,255,0.6)"></div>
<div class="a" style="left:242px;top:216px;width:1px;height:25px;background:rgba(255,255,255,0.6)"></div>
<div class="a" style="left:242px;top:240px;width:109px;height:1px;background:rgba(255,255,255,0.6)"></div>
<div class="a" style="left:240px;top:214px;width:113px;height:2px;background:#217346"></div>
<div class="a" style="left:240px;top:242px;width:113px;height:2px;background:#217346"></div>
<div class="a" style="left:240px;top:214px;width:2px;height:30px;background:#217346"></div>
<div class="a" style="left:351px;top:214px;width:2px;height:30px;background:#217346"></div>
<div class="a" style="left:348px;top:239px;width:7px;height:7px;background:#ffffff"></div>
<div class="a" style="left:349px;top:240px;width:5px;height:5px;background:#217346"></div>
<svg class="a" style="left:22px;top:8px" width="16" height="16" viewBox="0 0 16 16"><path d="M1.5 1.5 H14.5 V14.5 H1.5 Z" fill="none" stroke="#fff" stroke-width="2"/><rect x="3" y="2.5" width="10" height="4.5" fill="none"/><path d="M1 7.5 H15" stroke="#fff" stroke-width="2"/><rect x="5" y="10" width="6" height="5" fill="#fff"/><rect x="7" y="11.5" width="2" height="3" fill="#217346"/></svg>
<svg class="a" style="left:51px;top:9px" width="16" height="14" viewBox="0 0 16 14"><path d="M3 5 H9.5 A4 4 0 0 1 9.5 13 H7" fill="none" stroke="#6aa986" stroke-width="2"/><path d="M6 1.5 L2.5 5 L6 8.5" fill="none" stroke="#6aa986" stroke-width="2"/></svg>
<svg class="a" style="left:72.5px;top:13px" width="5.0" height="4" viewBox="0 0 5.0 4"><path d="M0 0.5 L5 0.5 L2 3.5 Z" fill="#6aa986"/></svg>
<svg class="a" style="left:87px;top:9px" width="16" height="14" viewBox="0 0 16 14"><path d="M13 5 H6.5 A4 4 0 0 0 6.5 13 H9" fill="none" stroke="#6aa986" stroke-width="2"/><path d="M10 1.5 L13.5 5 L10 8.5" fill="none" stroke="#6aa986" stroke-width="2"/></svg>
<svg class="a" style="left:107.5px;top:13px" width="5.0" height="4" viewBox="0 0 5.0 4"><path d="M0 0.5 L5 0.5 L2 3.5 Z" fill="#6aa986"/></svg>
<svg class="a" style="left:125px;top:14px" width="8" height="8" viewBox="0 0 8 8"><rect x="1" y="0" width="6" height="1.3" fill="#fff"/><path d="M0.5 3 H7.5 L4 7 Z" fill="#fff"/></svg>
<div class="t" style="left:480px;top:14px;width:307px;font-size:11.6px;color:#fff;text-align:center">BFC 2018 - zomer W6 - Excel (Productactivering is mislukt)</div>
<svg class="a" style="left:1101px;top:11px" width="14" height="11" viewBox="0 0 14 11"><rect x="0.5" y="0.5" width="13" height="10" fill="none" stroke="#fff"/><path d="M0.5 2.5 H13.5" stroke="#fff"/><path d="M7 9 V4.5 M4.8 6.5 L7 4.3 L9.2 6.5" fill="none" stroke="#fff"/></svg>
<div class="a" style="left:1149px;top:16px;width:10px;height:1px;background:#fff;"></div>
<svg class="a" style="left:1195px;top:11px" width="11" height="11" viewBox="0 0 11 11"><rect x="0.5" y="0.5" width="10" height="10" fill="none" stroke="#fff"/></svg>
<svg class="a" style="left:1240px;top:11px" width="12" height="11" viewBox="0 0 12 11"><path d="M0.5 0.5 L11 10.5 M11 0.5 L0.5 10.5" stroke="#fff" stroke-width="1.1"/></svg>
<div class="a" style="left:64px;top:36px;width:51px;height:24px;background:#f1f1f1;"></div>
<div class="t" style="left:9.5px;top:42px;font-size:11.3px;color:#fff;">Bestand</div>
<div class="t" style="left:208.5px;top:42px;font-size:12px;color:#fff;">Pagina-indeling</div>
<div class="t" style="left:130px;top:42px;font-size:12px;color:#fff;">Invoegen</div>
<div class="t" style="left:321px;top:42px;font-size:12px;color:#fff;">Formules</div>
<div class="t" style="left:399.5px;top:42px;font-size:12px;color:#fff;">Gegevens</div>
<div class="t" style="left:479.5px;top:42px;font-size:12px;color:#fff;">Controleren</div>
<div class="t" style="left:571px;top:42px;font-size:12px;color:#fff;">Beeld</div>
<div class="t" style="left:77px;top:42px;font-size:12px;color:#217346;">Start</div>
<svg class="a" style="left:628px;top:39px" width="13" height="16" viewBox="0 0 13 16"><path d="M6.5 1 A4.8 4.8 0 0 0 3.8 9.8 V12 H9.2 V9.8 A4.8 4.8 0 0 0 6.5 1 Z" fill="none" stroke="#fff" stroke-width="1.1"/><path d="M4.5 14 H8.5" stroke="#fff" stroke-width="1.1"/></svg>
<div class="t" style="left:646px;top:42px;font-size:11.7px;color:#dbe8df;">Geef aan wat u wilt doen...</div>
<div class="t" style="left:1118px;top:42px;font-size:12px;color:#fff;">Aanmelden</div>
<div class="a" style="left:1189px;top:36px;width:64px;height:23px;background:#1a5b37;"></div>
<svg class="a" style="left:1196px;top:40px" width="16" height="16" viewBox="0 0 16 16"><circle cx="7" cy="5" r="3.8" fill="none" stroke="#fff" stroke-width="1.2"/><path d="M1 15.5 A6 6 0 0 1 9 9.5" fill="none" stroke="#fff" stroke-width="1.2"/><path d="M12 9 V15.5 M8.8 12.3 H15.2" stroke="#fff" stroke-width="1.2"/></svg>
<div class="t" style="left:1215px;top:42px;font-size:12px;color:#fff;">Delen</div>
<div class="a" style="left:1px;top:60px;width:1268px;height:92px;background:#f1f1f1;"></div>
<div class="a" style="left:1px;top:152px;width:1268px;height:1px;background:#d5d5d5;"></div>
<div class="a" style="left:90px;top:64px;width:1px;height:84px;background:#dadada;"></div>
<div class="a" style="left:297px;top:64px;width:1px;height:84px;background:#dadada;"></div>
<div class="a" style="left:463px;top:64px;width:1px;height:84px;background:#dadada;"></div>
<div class="a" style="left:603px;top:64px;width:1px;height:84px;background:#dadada;"></div>
<div class="a" style="left:810px;top:64px;width:1px;height:84px;background:#dadada;"></div>
<div class="a" style="left:922px;top:64px;width:1px;height:84px;background:#dadada;"></div>
<div class="a" style="left:1096px;top:64px;width:1px;height:84px;background:#dadada;"></div>
<div class="t" style="left:-162.7px;top:138px;width:400px;text-align:center;font-size:11.7px;color:#5e5e5e;">Klembord</div>
<div class="t" style="left:-15px;top:138px;width:400px;text-align:center;font-size:11.7px;color:#5e5e5e;">Lettertype</div>
<div class="t" style="left:172px;top:138px;width:400px;text-align:center;font-size:11.7px;color:#5e5e5e;">Uitlijning</div>
<div class="t" style="left:325.5px;top:138px;width:400px;text-align:center;font-size:11.7px;color:#5e5e5e;">Getal</div>
<div class="t" style="left:506.5px;top:138px;width:400px;text-align:center;font-size:11.7px;color:#5e5e5e;">Stijlen</div>
<div class="t" style="left:666px;top:138px;width:400px;text-align:center;font-size:11.7px;color:#5e5e5e;">Cellen</div>
<div class="t" style="left:809.5px;top:138px;width:400px;text-align:center;font-size:11.7px;color:#5e5e5e;">Bewerken</div>
<svg class="a" style="left:78.5px;top:141px" width="8" height="8" viewBox="0 0 8 8"><path d="M0.5 7.5 V0.5 H7.5" fill="none" stroke="#8a8a8a"/><path d="M3 3 L7 7 M4 7.5 H7.5 V4" fill="none" stroke="#6a6a6a"/></svg>
<svg class="a" style="left:285px;top:141px" width="8" height="8" viewBox="0 0 8 8"><path d="M0.5 7.5 V0.5 H7.5" fill="none" stroke="#8a8a8a"/><path d="M3 3 L7 7 M4 7.5 H7.5 V4" fill="none" stroke="#6a6a6a"/></svg>
<svg class="a" style="left:451px;top:141px" width="8" height="8" viewBox="0 0 8 8"><path d="M0.5 7.5 V0.5 H7.5" fill="none" stroke="#8a8a8a"/><path d="M3 3 L7 7 M4 7.5 H7.5 V4" fill="none" stroke="#6a6a6a"/></svg>
<svg class="a" style="left:591px;top:141px" width="8" height="8" viewBox="0 0 8 8"><path d="M0.5 7.5 V0.5 H7.5" fill="none" stroke="#8a8a8a"/><path d="M3 3 L7 7 M4 7.5 H7.5 V4" fill="none" stroke="#6a6a6a"/></svg>
<svg class="a" style="left:1249px;top:140px" width="11" height="7" viewBox="0 0 11 7"><path d="M1 6 L5.5 1.5 L10 6" fill="none" stroke="#5a5a5a" stroke-width="1.6"/></svg>
<svg class="a" style="left:15px;top:67px" width="30" height="32" viewBox="0 0 30 32"><rect x="1" y="3" width="23" height="26" rx="1" fill="#d4d4d4"/><rect x="6" y="1" width="13" height="6" fill="#b8b8b8"/><circle cx="12.5" cy="2.8" r="1.3" fill="#f3f3f3"/><path d="M15.5 12.5 H24 L28.5 17 V30.5 H15.5 Z" fill="#f8f8f8" stroke="#c4c4c4"/><path d="M24 12.5 V17 H28.5" fill="none" stroke="#c4c4c4"/></svg>
<div class="t" style="left:7.5px;top:104px;font-size:11.8px;color:#8c8c8c;">Plakken</div>
<svg class="a" style="left:24.5px;top:122px" width="6" height="4" viewBox="0 0 6 4"><path d="M0 0.5 L6 0.5 L3 3.5 Z" fill="#a8a8a8"/></svg>
<svg class="a" style="left:54px;top:66px" width="16" height="16" viewBox="0 0 16 16"><path d="M4 0.5 L9.5 10 M12 0.5 L6.5 10" stroke="#505050" stroke-width="1.6"/><circle cx="4" cy="12.2" r="2.6" fill="none" stroke="#5b86bd" stroke-width="1.4"/><circle cx="12" cy="12.2" r="2.6" fill="none" stroke="#5b86bd" stroke-width="1.4"/></svg>
<svg class="a" style="left:54px;top:89px" width="16" height="16" viewBox="0 0 16 16"><path d="M0.5 1.5 H6 L7.5 3 V11.5 H0.5 Z" fill="#fff" stroke="#555" stroke-width="1.1"/><path d="M1.8 4.5 H4.5 M1.8 6.5 H4.5 M1.8 8.5 H4.5" stroke="#4a6fa0" stroke-width="0.9"/><path d="M6.5 4.5 H12.5 L15 7 V14.5 H6.5 Z" fill="#fff" stroke="#555" stroke-width="1.1"/><path d="M8.2 8 H10.5 M8.2 10 H13.5 M8.2 12 H13.5" stroke="#4a6fa0" stroke-width="0.9"/></svg>
<svg class="a" style="left:75.5px;top:95.5px" width="6" height="4" viewBox="0 0 6 4"><path d="M0 0.5 L6 0.5 L3 3.5 Z" fill="#606060"/></svg>
<svg class="a" style="left:53px;top:111px" width="18" height="17" viewBox="0 0 18 17"><path d="M1 9 L7.5 5 L11.5 11 L7 15.5 Z" fill="#e6bd6a"/><path d="M7.5 5.5 L11 3 L14 7.5 L11 10 Z" fill="#5a5a5a"/><path d="M12 3.5 L15 1 L17 3.5 L14 6" fill="#5a5a5a"/></svg>
<div class="a" style="left:95px;top:71px;width:111px;height:23px;background:#fff;border:1px solid #c6c6c6"></div>
<div class="a" style="left:206px;top:71px;width:43px;height:23px;background:#fff;border:1px solid #c6c6c6"></div>
<div class="t" style="left:98px;top:77px;font-size:12px;color:#444;">Arial</div>
<div class="t" style="left:209px;top:77px;font-size:12px;color:#444;">12</div>
<svg class="a" style="left:195.5px;top:80.5px" width="6" height="4" viewBox="0 0 6 4"><path d="M0 0.5 L6 0.5 L3 3.5 Z" fill="#606060"/></svg>
<svg class="a" style="left:238.5px;top:80.5px" width="6" height="4" viewBox="0 0 6 4"><path d="M0 0.5 L6 0.5 L3 3.5 Z" fill="#606060"/></svg>
<svg class="a" style="left:253px;top:73px" width="17" height="16" viewBox="0 0 17 16"><path d="M2.5 15 L7 3.5 L11.5 15 M4 11 H10" fill="none" stroke="#5a5a5a" stroke-width="1.8"/><path d="M10 4 L12.8 1 L15.6 4 Z" fill="#4a7ab5"/></svg>
<svg class="a" style="left:276px;top:73px" width="16" height="16" viewBox="0 0 16 16"><path d="M2.5 15 L6 6.5 L9.5 15 M3.7 12 H8.3" fill="none" stroke="#5a5a5a" stroke-width="1.6"/><path d="M9 1.5 H14.5 L11.75 4.5 Z" fill="#4a7ab5"/></svg>
<div class="a" style="left:95px;top:102px;width:22px;height:23px;background:#c5c5c5;"></div>
<div class="t" style="left:100px;top:107px;font-size:13px;font-weight:bold;color:#444">B</div>
<div class="t" style="left:124px;top:107px;font-size:13px;font-style:italic;font-family:'Liberation Serif',serif;font-weight:bold;color:#505050">I</div>
<div class="t" style="left:144px;top:107px;font-size:13px;font-weight:bold;color:#505050;text-decoration:underline">U</div>
<svg class="a" style="left:163px;top:111.5px" width="6" height="4" viewBox="0 0 6 4"><path d="M0 0.5 L6 0.5 L3 3.5 Z" fill="#606060"/></svg>
<div class="a" style="left:177px;top:102px;width:1px;height:22px;background:#d6d6d6;"></div>
<svg class="a" style="left:186px;top:105px" width="14" height="15" viewBox="0 0 14 15"><path d="M0.5 0.5 H13.5 V12.5 H0.5 Z M7 0.5 V12.5 M0.5 6.5 H13.5" fill="none" stroke="#777" stroke-dasharray="1 1"/><path d="M0 14.5 H14" stroke="#555"/></svg>
<svg class="a" style="left:206px;top:111.5px" width="6" height="4" viewBox="0 0 6 4"><path d="M0 0.5 L6 0.5 L3 3.5 Z" fill="#606060"/></svg>
<div class="a" style="left:220px;top:102px;width:1px;height:22px;background:#d6d6d6;"></div>
<svg class="a" style="left:228px;top:104px" width="17" height="18" viewBox="0 0 17 18"><path d="M5 2 L1.5 7.5 L6 11.5 L10.5 6 Z" fill="#fff" stroke="#505050"/><path d="M4.5 1.5 V5" stroke="#505050"/><path d="M12 6 Q15 8 12.5 11" fill="#4a7ab5" stroke="#4a7ab5" stroke-width="1.4"/><rect x="0" y="13" width="16" height="4" fill="#f5e600"/></svg>
<svg class="a" style="left:249.5px;top:111.5px" width="6" height="4" viewBox="0 0 6 4"><path d="M0 0.5 L6 0.5 L3 3.5 Z" fill="#606060"/></svg>
<svg class="a" style="left:262px;top:104px" width="16" height="18" viewBox="0 0 16 18"><path d="M3.5 12 L8 1.5 L12.5 12 M5 8.5 H11" fill="none" stroke="#505050" stroke-width="1.8"/><rect x="0" y="13" width="16" height="4" fill="#e00000"/></svg>
<svg class="a" style="left:283.5px;top:111.5px" width="6" height="4" viewBox="0 0 6 4"><path d="M0 0.5 L6 0.5 L3 3.5 Z" fill="#606060"/></svg>
<div class="a" style="left:306px;top:73.5px;width:14px;height:1.3px;background:#555;"></div>
<div class="a" style="left:306px;top:77.0px;width:14px;height:1.3px;background:#555;"></div>
<div class="a" style="left:306px;top:80.5px;width:14px;height:1.3px;background:#555;"></div>
<div class="a" style="left:328px;top:77.5px;width:14px;height:1.3px;background:#555;"></div>
<div class="a" style="left:328px;top:81.0px;width:14px;height:1.3px;background:#555;"></div>
<div class="a" style="left:328px;top:84.5px;width:14px;height:1.3px;background:#555;"></div>
<div class="a" style="left:346px;top:71px;width:22px;height:23px;background:#c5c5c5;"></div>
<div class="a" style="left:350px;top:82.0px;width:14px;height:1.3px;background:#555;"></div>
<div class="a" style="left:350px;top:85.5px;width:14px;height:1.3px;background:#555;"></div>
<div class="a" style="left:350px;top:89.0px;width:14px;height:1.3px;background:#555;"></div>
<svg class="a" style="left:372px;top:72px" width="20" height="18" viewBox="0 0 20 18"><g transform="rotate(-45 8 8)" fill="none" stroke="#555" stroke-width="1.3"><ellipse cx="4" cy="9" rx="2.3" ry="2.6"/><path d="M6.3 6 V11.8"/><path d="M9 2 V11.8"/><ellipse cx="11.3" cy="9" rx="2.3" ry="2.6"/></g><path d="M8.5 16.5 L17.5 7.2" stroke="#555" stroke-width="1.2"/><path d="M14 6.5 H18 V10.5" fill="none" stroke="#555" stroke-width="1.2"/></svg>
<svg class="a" style="left:393.5px;top:80.5px" width="6" height="4" viewBox="0 0 6 4"><path d="M0 0.5 L6 0.5 L3 3.5 Z" fill="#606060"/></svg>
<div class="a" style="left:419px;top:70px;width:1px;height:55px;background:#d6d6d6;"></div>
<svg class="a" style="left:427px;top:73px" width="16" height="17" viewBox="0 0 16 17"><rect x="0.5" y="1.5" width="9" height="4" fill="none" stroke="#555"/><path d="M2.5 3.5 H14.5" stroke="#4a7ab5" stroke-width="1"/><rect x="0.5" y="8.5" width="9" height="7" fill="#fff" stroke="#555"/><path d="M2.5 10.8 H7.5 M2.5 12.8 H7.5" stroke="#4a7ab5" stroke-width="1"/><path d="M14.5 6 Q14.5 9.5 10.5 9.5 M12.3 7.7 L10.3 9.5 L12.3 11.3" fill="none" stroke="#4a7ab5" stroke-width="1.3"/></svg>
<div class="a" style="left:306px;top:107.5px;width:14px;height:1.3px;background:#555;"></div>
<div class="a" style="left:306px;top:110.5px;width:10px;height:1.3px;background:#555;"></div>
<div class="a" style="left:306px;top:113.5px;width:14px;height:1.3px;background:#555;"></div>
<div class="a" style="left:306px;top:116.5px;width:10px;height:1.3px;background:#555;"></div>
<div class="a" style="left:324px;top:102px;width:22px;height:23px;background:#c5c5c5;"></div>
<div class="a" style="left:328px;top:107.5px;width:14px;height:1.3px;background:#555;"></div>
<div class="a" style="left:330px;top:110.5px;width:10px;height:1.3px;background:#555;"></div>
<div class="a" style="left:328px;top:113.5px;width:14px;height:1.3px;background:#555;"></div>
<div class="a" style="left:330px;top:116.5px;width:10px;height:1.3px;background:#555;"></div>
<div class="a" style="left:350px;top:107.5px;width:14px;height:1.3px;background:#555;"></div>
<div class="a" style="left:354px;top:110.5px;width:10px;height:1.3px;background:#555;"></div>
<div class="a" style="left:350px;top:113.5px;width:14px;height:1.3px;background:#555;"></div>
<div class="a" style="left:354px;top:116.5px;width:10px;height:1.3px;background:#555;"></div>
<svg class="a" style="left:374px;top:106px" width="16" height="14" viewBox="0 0 16 14"><path d="M7 1.5 H16 M9 4.5 H16 M9 7.5 H16 M7 10.5 H16 M0 13.5 H16" stroke="#555" stroke-width="1"/><path d="M7.5 6 H1.5 M4.2 3.2 L1.4 6 L4.2 8.8" fill="none" stroke="#4a7ab5" stroke-width="1.8"/></svg>
<svg class="a" style="left:396px;top:106px" width="16" height="14" viewBox="0 0 16 14"><path d="M7 1.5 H16 M9 4.5 H16 M9 7.5 H16 M7 10.5 H16 M0 13.5 H16" stroke="#555" stroke-width="1"/><path d="M0 6 H6 M3.2 3.2 L6 6 L3.2 8.8" fill="none" stroke="#4a7ab5" stroke-width="1.8"/></svg>
<svg class="a" style="left:427px;top:105px" width="16" height="15" viewBox="0 0 16 15"><path d="M0.5 0.5 H15.5 V14.5 H0.5 Z M0.5 3.5 H15.5 M0.5 11.5 H15.5 M8 0.5 V3.5 M8 11.5 V14.5" fill="none" stroke="#555"/><path d="M3 7.5 H13 M5 5.5 L3 7.5 L5 9.5 M11 5.5 L13 7.5 L11 9.5" fill="none" stroke="#4a7ab5"/></svg>
<svg class="a" style="left:448px;top:111.5px" width="6" height="4" viewBox="0 0 6 4"><path d="M0 0.5 L6 0.5 L3 3.5 Z" fill="#606060"/></svg>
<div class="a" style="left:468px;top:71px;width:131px;height:23px;background:#fff;border:1px solid #c6c6c6"></div>
<div class="t" style="left:471.5px;top:77px;font-size:12px;color:#444;">Standaard</div>
<svg class="a" style="left:588px;top:80.5px" width="6" height="4" viewBox="0 0 6 4"><path d="M0 0.5 L6 0.5 L3 3.5 Z" fill="#606060"/></svg>
<svg class="a" style="left:471px;top:104px" width="17" height="17" viewBox="0 0 17 17"><rect x="0.5" y="0.5" width="15" height="8" fill="none" stroke="#4a7ab5" stroke-width="1.3"/><circle cx="8" cy="4.5" r="2" fill="#4a7ab5"/><ellipse cx="11" cy="9.5" rx="4" ry="1.5" fill="#e8c079"/><ellipse cx="11" cy="12" rx="4" ry="1.5" fill="#e8c079"/><ellipse cx="6" cy="14.5" rx="4" ry="1.5" fill="#e8c079"/></svg>
<svg class="a" style="left:492.5px;top:111.5px" width="6" height="4" viewBox="0 0 6 4"><path d="M0 0.5 L6 0.5 L3 3.5 Z" fill="#606060"/></svg>
<div class="t" style="left:507px;top:106px;font-size:15px;color:#505050">%</div>
<div class="t" style="left:527.5px;top:109px;font-size:10.5px;color:#505050;letter-spacing:-0.5px">000</div>
<div class="a" style="left:550px;top:102px;width:1px;height:22px;background:#d6d6d6;"></div>
<div class="t" style="left:562px;top:104px;font-size:8.5px;color:#505050;line-height:8px">&nbsp;,0<br>,00</div>
<svg class="a" style="left:557px;top:105px" width="8" height="6" viewBox="0 0 8 6"><path d="M7.5 3 H1 M3.5 0.5 L1 3 L3.5 5.5" fill="none" stroke="#4a7ab5" stroke-width="1.3"/></svg>
<div class="t" style="left:582px;top:104px;font-size:8.5px;color:#505050;line-height:8px">,00<br>&nbsp;,0</div>
<svg class="a" style="left:579px;top:113px" width="9" height="6" viewBox="0 0 9 6"><path d="M0.5 3 H8 M5.5 0.5 L8 3 L5.5 5.5" fill="none" stroke="#4a7ab5" stroke-width="1.3"/></svg>
<svg class="a" style="left:638px;top:67px" width="31" height="31" viewBox="0 0 31 31"><g fill="#fff" stroke="#555" stroke-width="1"><path d="M0.5 0.5 H24.5 V28.5 H0.5 Z"/></g><path d="M0.5 7.5 H24.5 M0.5 14.5 H24.5 M0.5 21.5 H24.5 M8.5 0.5 V28.5 M16.5 0.5 V28.5" stroke="#555"/><rect x="8.5" y="1" width="6" height="6" fill="#d05a38"/><rect x="8.5" y="8" width="14" height="6" fill="#3f73b6"/><rect x="8.5" y="15" width="10" height="6" fill="#d05a38"/><rect x="8.5" y="22" width="5" height="6" fill="#3f73b6"/><rect x="13.5" y="16.5" width="16" height="13" fill="#fff" stroke="#555"/><text x="17" y="27" font-size="11" font-family="Liberation Sans" fill="#333">&#8800;</text></svg>
<svg class="a" style="left:711px;top:68px" width="30" height="30" viewBox="0 0 30 30"><rect x="0.5" y="0.5" width="23" height="20" fill="#fff" stroke="#666"/><rect x="5" y="5" width="18" height="15" fill="#b9cbe3"/><path d="M0.5 5 H23.5 M0.5 10 H23.5 M0.5 15 H23.5 M6 0.5 V20.5 M12 0.5 V20.5 M18 0.5 V20.5" stroke="#888"/><path d="M26 9 L19 17" stroke="#6a6a6a" stroke-width="3.5"/><path d="M18 16 Q10 18 8 28 Q16 27 21 21 Z" fill="#4a7ab5"/></svg>
<svg class="a" style="left:766px;top:68px" width="30" height="30" viewBox="0 0 30 30"><rect x="0.5" y="0.5" width="23" height="20" fill="#fff" stroke="#666"/><rect x="5" y="5" width="14" height="10" fill="#b9cbe3"/><path d="M0.5 5 H23.5 M0.5 15 H23.5 M5 0.5 V20.5 M19 0.5 V20.5" stroke="#888"/><path d="M26 9 L19 17" stroke="#6a6a6a" stroke-width="3.5"/><path d="M18 16 Q10 18 8 28 Q16 27 21 21 Z" fill="#4a7ab5"/></svg>
<div class="t" style="left:451.5px;top:103px;width:400px;text-align:center;font-size:11.7px;color:#444;">Voorwaardelijke</div>
<div class="t" style="left:448px;top:119px;width:400px;text-align:center;font-size:11.7px;color:#444;">opmaak</div>
<svg class="a" style="left:671.5px;top:123.5px" width="6" height="4" viewBox="0 0 6 4"><path d="M0 0.5 L6 0.5 L3 3.5 Z" fill="#606060"/></svg>
<div class="t" style="left:524px;top:103px;width:400px;text-align:center;font-size:11.7px;color:#444;">Opmaken</div>
<div class="t" style="left:520px;top:119px;width:400px;text-align:center;font-size:11.7px;color:#444;">als tabel</div>
<svg class="a" style="left:744.5px;top:123.5px" width="6" height="4" viewBox="0 0 6 4"><path d="M0 0.5 L6 0.5 L3 3.5 Z" fill="#606060"/></svg>
<div class="t" style="left:579px;top:103px;width:400px;text-align:center;font-size:11.7px;color:#444;">Celstijlen</div>
<svg class="a" style="left:776.5px;top:123.5px" width="6" height="4" viewBox="0 0 6 4"><path d="M0 0.5 L6 0.5 L3 3.5 Z" fill="#606060"/></svg>
<svg class="a" style="left:817px;top:66px" width="18" height="17" viewBox="0 0 18 17"><path d="M0.5 0.5 H5.5 V5.5 H0.5 Z M0.5 5.5 V15.5 H9.5 V5.5 M0.5 10.5 H9.5 M5.5 5.5 V15.5" fill="none" stroke="#555"/><rect x="6.5" y="3" width="10" height="5" fill="none" stroke="#555"/><path d="M11 5.5 H3 M5 3.5 L3 5.5 L5 7.5" fill="none" stroke="#4a7ab5" stroke-width="1.3"/></svg>
<div class="t" style="left:837.5px;top:69px;font-size:11.7px;color:#444;">Invoegen</div>
<svg class="a" style="left:895px;top:73px" width="6" height="4" viewBox="0 0 6 4"><path d="M0 0.5 L6 0.5 L3 3.5 Z" fill="#606060"/></svg>
<svg class="a" style="left:817px;top:89px" width="18" height="16" viewBox="0 0 18 16"><path d="M0.5 0.5 H5.5 V5.5 H0.5 Z M0.5 5.5 V15.5 H9.5 V5.5 M0.5 10.5 H9.5 M5.5 5.5 V15.5" fill="none" stroke="#555"/><rect x="5.5" y="3" width="5" height="5" fill="none" stroke="#555"/><path d="M10 2 L16 8 M16 2 L10 8" stroke="#e0442c" stroke-width="1.5"/></svg>
<div class="t" style="left:837.5px;top:91px;font-size:11.7px;color:#444;">Verwijderen</div>
<svg class="a" style="left:907.5px;top:95.5px" width="6" height="4" viewBox="0 0 6 4"><path d="M0 0.5 L6 0.5 L3 3.5 Z" fill="#606060"/></svg>
<svg class="a" style="left:817px;top:112px" width="17" height="16" viewBox="0 0 17 16"><path d="M1 2.5 H16 M3 1 L1 2.5 L3 4 M14 1 L16 2.5 L14 4" fill="none" stroke="#4a7ab5"/><rect x="0.5" y="5.5" width="15" height="10" fill="#fff" stroke="#555"/><path d="M0.5 9 H15.5 M0.5 12.5 H15.5 M5.5 5.5 V15.5 M10.5 5.5 V15.5" stroke="#555"/><rect x="5.5" y="9" width="5" height="3.5" fill="#4a7ab5"/></svg>
<div class="t" style="left:837.5px;top:115px;font-size:11.7px;color:#444;">Opmaak</div>
<svg class="a" style="left:884.5px;top:119.5px" width="6" height="4" viewBox="0 0 6 4"><path d="M0 0.5 L6 0.5 L3 3.5 Z" fill="#606060"/></svg>
<svg class="a" style="left:930px;top:66px" width="16" height="15" viewBox="0 0 16 15"><path d="M14.5 3.5 V1.5 H1.5 L8 7.5 L1.5 13.5 H14.5 V11.5" fill="none" stroke="#4a4a4a" stroke-width="2.2"/></svg>
<svg class="a" style="left:951px;top:71px" width="6" height="4" viewBox="0 0 6 4"><path d="M0 0.5 L6 0.5 L3 3.5 Z" fill="#606060"/></svg>
<svg class="a" style="left:930px;top:89px" width="16" height="16" viewBox="0 0 16 16"><rect x="0.5" y="0.5" width="15" height="15" fill="#fff" stroke="#555"/><rect x="0" y="0" width="16" height="3" fill="#555"/><path d="M8 5 V12.5 M4.5 9.5 L8 13 L11.5 9.5" fill="none" stroke="#4a7ab5" stroke-width="1.8"/></svg>
<svg class="a" style="left:949px;top:95.5px" width="6" height="4" viewBox="0 0 6 4"><path d="M0 0.5 L6 0.5 L3 3.5 Z" fill="#606060"/></svg>
<svg class="a" style="left:930px;top:112px" width="17" height="15" viewBox="0 0 17 15"><path d="M2 9 L9.5 1.5 L15 7 L8 14 H5 Z" fill="#e88a9b"/><path d="M2 9 L7 14" stroke="#c86a7b"/><path d="M1 14.5 H16" stroke="#777"/></svg>
<svg class="a" style="left:949px;top:119.5px" width="6" height="4" viewBox="0 0 6 4"><path d="M0 0.5 L6 0.5 L3 3.5 Z" fill="#606060"/></svg>
<svg class="a" style="left:979px;top:68px" width="30" height="28" viewBox="0 0 30 28"><text x="0" y="12" font-size="14" font-weight="bold" font-family="Liberation Sans" fill="#4a7ab5">A</text><text x="1" y="26" font-size="14" font-weight="bold" font-family="Liberation Sans" fill="#9b59b6">Z</text><path d="M12 9 H29 L23 16 V25 L19 22 V16 Z" fill="#6a6a6a"/></svg>
<div class="t" style="left:793.5px;top:103px;width:400px;text-align:center;font-size:11.7px;color:#444;">Sorteren en</div>
<div class="t" style="left:790px;top:119px;width:400px;text-align:center;font-size:11.7px;color:#444;">filteren</div>
<svg class="a" style="left:1012px;top:123.5px" width="6" height="4" viewBox="0 0 6 4"><path d="M0 0.5 L6 0.5 L3 3.5 Z" fill="#606060"/></svg>
<svg class="a" style="left:1045px;top:67px" width="29" height="29" viewBox="0 0 29 29"><circle cx="18" cy="11" r="8.2" fill="none" stroke="#3f73b6" stroke-width="2.6"/><path d="M12 17 L3 26" stroke="#3f73b6" stroke-width="4.2" stroke-linecap="round"/></svg>
<div class="t" style="left:859.5px;top:103px;width:400px;text-align:center;font-size:11.7px;color:#444;">Zoeken en</div>
<div class="t" style="left:855.5px;top:119px;width:400px;text-align:center;font-size:11.5px;color:#444;">selecteren</div>
<svg class="a" style="left:1085px;top:123.5px" width="6" height="4" viewBox="0 0 6 4"><path d="M0 0.5 L6 0.5 L3 3.5 Z" fill="#606060"/></svg>
<div class="a" style="left:6px;top:163px;width:102px;height:26px;background:#fff;border:1px solid #c6c6c6"></div>
<div class="t" style="left:13px;top:170px;font-size:12px;color:#333;">B1</div>
<svg class="a" style="left:93.5px;top:173.5px" width="7.0" height="4" viewBox="0 0 7.0 4"><path d="M0 0.5 L7 0.5 L3 3.5 Z" fill="#555"/></svg>
<div class="a" style="left:122px;top:171px;width:2px;height:2px;background:#9a9a9a;"></div>
<div class="a" style="left:122px;top:175px;width:2px;height:2px;background:#9a9a9a;"></div>
<div class="a" style="left:122px;top:179px;width:2px;height:2px;background:#9a9a9a;"></div>
<div class="a" style="left:138px;top:163px;width:110px;height:26px;background:#fff;border:1px solid #c6c6c6"></div>
<svg class="a" style="left:151px;top:170px" width="12" height="12" viewBox="0 0 12 12"><path d="M1 1 L11 11 M11 1 L1 11" stroke="#b5b5b5" stroke-width="1.4"/></svg>
<svg class="a" style="left:186px;top:170px" width="14" height="12" viewBox="0 0 14 12"><path d="M1 6.5 L5 10.5 L13 1.5" fill="none" stroke="#b5b5b5" stroke-width="1.6"/></svg>
<div class="t" style="left:222px;top:169px;font-size:13px;font-style:italic;font-family:'Liberation Serif',serif;color:#555">f<span style="font-size:10px">x</span></div>
<div class="a" style="left:251px;top:163px;width:1013px;height:26px;background:#fff;border:1px solid #c6c6c6"></div>
<div class="t" style="left:263px;top:170px;font-size:12px;color:#333;">TAF</div>
<svg class="a" style="left:1250px;top:172px" width="11" height="7" viewBox="0 0 11 7"><path d="M1 1 L5.5 5.5 L10 1" fill="none" stroke="#5a5a5a" stroke-width="1.6"/></svg>
<div class="a" style="left:1248px;top:197px;width:21px;height:491px;background:#e6e6e6;"></div>
<div class="a" style="left:1251px;top:201px;width:15px;height:15px;background:#fff;border:1px solid #c6c6c6"></div>
<svg class="a" style="left:1254px;top:206px" width="9" height="5"><path d="M0 4.5 H8 L4 0.5 Z" fill="#777"/></svg>
<div class="a" style="left:1251px;top:216px;width:15px;height:39px;background:#fff;border:1px solid #c6c6c6"></div>
<div class="a" style="left:1251px;top:673px;width:15px;height:15px;background:#fff;border:1px solid #c6c6c6"></div>
<svg class="a" style="left:1254px;top:678px" width="9" height="5"><path d="M0 0.5 H8 L4 4.5 Z" fill="#777"/></svg>
<div class="a" style="left:1px;top:688px;width:1268px;height:28px;background:#e6e6e6;"></div>
<div class="a" style="left:1px;top:688px;width:1268px;height:1px;background:#ababab;"></div>
<div class="a" style="left:1px;top:716px;width:1268px;height:1px;background:#c8c8c8;"></div>
<svg class="a" style="left:27px;top:697px" width="6" height="9" viewBox="0 0 6 9"><path d="M5 0.5 V8.5 L0.5 4.5 Z" fill="#bdbdbd"/></svg>
<svg class="a" style="left:56px;top:697px" width="6" height="9" viewBox="0 0 6 9"><path d="M1 0.5 V8.5 L5.5 4.5 Z" fill="#bdbdbd"/></svg>
<div class="a" style="left:101px;top:692px;width:1px;height:20px;background:#b5b5b5;"></div>
<div class="a" style="left:179px;top:692px;width:1px;height:20px;background:#b5b5b5;"></div>
<div class="a" style="left:233px;top:692px;width:1px;height:20px;background:#b5b5b5;"></div>
<div class="a" style="left:448px;top:692px;width:1px;height:20px;background:#b5b5b5;"></div>
<div class="a" style="left:540px;top:692px;width:1px;height:20px;background:#b5b5b5;"></div>
<div class="t" style="left:115.5px;top:696px;font-size:11px;color:#444;">PLAYERS</div>
<div class="t" style="left:192px;top:696px;font-size:11.5px;color:#444;">BFC1</div>
<div class="t" style="left:246px;top:696px;font-size:11.5px;color:#444;">BFC2</div>
<div class="a" style="left:287px;top:688px;width:55px;height:25px;background:#fff;"></div>
<div class="a" style="left:287px;top:711px;width:55px;height:2px;background:#217346;"></div>
<div class="a" style="left:287px;top:688px;width:1px;height:25px;background:#ababab;"></div>
<div class="a" style="left:341px;top:688px;width:1px;height:25px;background:#ababab;"></div>
<div class="t" style="left:300px;top:696px;font-size:11.3px;font-weight:bold;color:#217346">BFC3</div>
<div class="t" style="left:354.5px;top:696px;font-size:11.9px;color:#444;">RANKING 123</div>
<div class="t" style="left:462.5px;top:696px;font-size:11.6px;color:#444;">FINALE 123</div>
<svg class="a" style="left:573px;top:692px" width="18" height="18" viewBox="0 0 18 18"><circle cx="9" cy="9" r="7.7" fill="none" stroke="#777" stroke-width="1.3"/><path d="M9 5 V13 M5 9 H13" stroke="#777" stroke-width="1.6"/></svg>
<div class="a" style="left:762px;top:698px;width:2px;height:2px;background:#a8a8a8;"></div>
<div class="a" style="left:762px;top:702px;width:2px;height:2px;background:#a8a8a8;"></div>
<div class="a" style="left:762px;top:706px;width:2px;height:2px;background:#a8a8a8;"></div>
<div class="a" style="left:779px;top:695px;width:15px;height:15px;background:#fff;border:1px solid #c6c6c6"></div>
<svg class="a" style="left:784px;top:698px" width="5" height="9"><path d="M4.5 0 V8 L0.5 4 Z" fill="#777"/></svg>
<div class="a" style="left:793px;top:695px;width:211px;height:15px;background:#fff;border:1px solid #c6c6c6"></div>
<div class="a" style="left:1004px;top:695px;width:227px;height:15px;background:#dadada;"></div>
<div class="a" style="left:1230px;top:695px;width:15px;height:15px;background:#fff;border:1px solid #c6c6c6"></div>
<svg class="a" style="left:1236px;top:698px" width="5" height="9"><path d="M0.5 0 V8 L4.5 4 Z" fill="#777"/></svg>
<div class="a" style="left:1px;top:717px;width:1268px;height:21px;background:#f0f0f0;"></div>
<div class="t" style="left:9px;top:722px;font-size:11px;color:#444;">Gereed</div>
<div class="a" style="left:966px;top:717px;width:38px;height:21px;background:#c6c6c6;"></div>
<svg class="a" style="left:977px;top:720px" width="15" height="15" viewBox="0 0 15 15"><path d="M0.5 0.5 H14.5 V14.5 H0.5 Z M5.2 0.5 V14.5 M9.8 0.5 V14.5 M0.5 5.2 H14.5 M0.5 9.8 H14.5" fill="none" stroke="#666" stroke-width="1"/></svg>
<svg class="a" style="left:1016px;top:720px" width="15" height="15" viewBox="0 0 15 15"><rect x="0.5" y="0.5" width="14" height="14" fill="none" stroke="#666"/><rect x="3.5" y="3.5" width="8" height="8" fill="none" stroke="#666"/><path d="M5 6 H10 M5 8 H10" stroke="#666"/></svg>
<svg class="a" style="left:1053px;top:720px" width="15" height="15" viewBox="0 0 15 15"><path d="M0.5 14.5 V0.5 H14.5 V14.5 Z M0.5 9 H9 V0.5" fill="none" stroke="#666"/></svg>
<div class="a" style="left:1085px;top:727px;width:7px;height:2px;background:#666;"></div>
<div class="a" style="left:1095px;top:727px;width:98px;height:1px;background:#9a9a9a;"></div>
<div class="a" style="left:1143px;top:721px;width:4px;height:13px;background:#666;"></div>
<div class="a" style="left:1199px;top:727px;width:10px;height:2px;background:#666;"></div>
<div class="a" style="left:1203px;top:723px;width:2px;height:10px;background:#666;"></div>
<div class="t" style="left:1223px;top:722px;font-size:11px;color:#666;">100%</div>
<div class="a" style="left:0px;top:60px;width:1px;height:679px;background:#217346;"></div>
<div class="a" style="left:1269px;top:60px;width:1px;height:679px;background:#217346;"></div>
<div class="a" style="left:0px;top:738px;width:1270px;height:1px;background:#217346;"></div></body></html>
